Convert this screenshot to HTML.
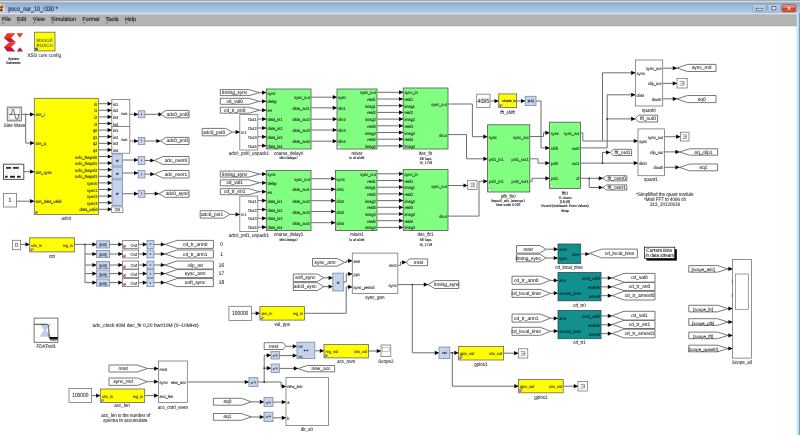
<!DOCTYPE html>
<html><head><meta charset="utf-8"><title>poco_nar_10_r330</title>
<style>
html,body{margin:0;padding:0;background:#fff;overflow:hidden;}
body{width:800px;height:435px;position:relative;font-family:"Liberation Sans",sans-serif;}
svg{position:absolute;left:0;top:0;will-change:transform;}
svg text{font-family:"Liberation Sans",sans-serif;text-rendering:geometricPrecision;}
</style></head><body>
<svg width="800" height="435" viewBox="0 0 800 435">
<defs>
<linearGradient id="tb" x1="0" y1="0" x2="0" y2="1">
<stop offset="0" stop-color="#89a9cf"/><stop offset="0.5" stop-color="#a2bddf"/><stop offset="1" stop-color="#b6cdea"/>
</linearGradient>
<linearGradient id="cls" x1="0" y1="0" x2="0" y2="1">
<stop offset="0" stop-color="#ec9c8c"/><stop offset="0.45" stop-color="#e07060"/><stop offset="0.55" stop-color="#d2401e"/><stop offset="1" stop-color="#d85a30"/>
</linearGradient>
<linearGradient id="btn" x1="0" y1="0" x2="0" y2="1">
<stop offset="0" stop-color="#c4d6ec"/><stop offset="0.5" stop-color="#a8c0de"/><stop offset="1" stop-color="#b8cce6"/>
</linearGradient>
</defs>
<rect x="0" y="0" width="800" height="435" fill="#fff"/>
<!-- title bar -->
<rect x="0" y="0" width="800" height="1.2" fill="#a9a9a9"/>
<rect x="0" y="1.2" width="800" height="1" fill="#cdd5df"/>
<rect x="0" y="2.2" width="800" height="11" fill="url(#tb)"/>
<rect x="0" y="13.2" width="800" height="1" fill="#d6dee8"/>
<rect x="0" y="14.2" width="797" height="11" fill="#b3b3b3"/>
<rect x="0" y="25.2" width="797" height="1" fill="#9a9a9a"/>
<rect x="796.6" y="13" width="1" height="422" fill="#c8d6ea"/>
<rect x="797.6" y="13" width="1.5" height="422" fill="#b8dcf6"/>
<rect x="799.1" y="13" width="0.9" height="422" fill="#5a98ae"/>
<rect x="0" y="4" width="4.6" height="8" fill="#e6dccc"/><ellipse cx="2.4" cy="6.6" rx="1.6" ry="2" fill="#c89a30"/><ellipse cx="1.4" cy="10.2" rx="1.3" ry="1.4" fill="#7a2a1a"/><ellipse cx="1.2" cy="7.4" rx="0.9" ry="1.2" fill="#6a2a10"/>
<text x="8.3" y="10.9" font-size="6.6" fill="#1e2c48" stroke="#1e2c48" stroke-width="0.15" textLength="49.4" lengthAdjust="spacingAndGlyphs">poco_nar_10_r330 *</text>
<rect x="752.4" y="4.5" width="13.9" height="7.5" rx="1.5" fill="url(#btn)" stroke="#7e98bc" stroke-width="0.6"/>
<rect x="756.3" y="8.4" width="6" height="1.8" fill="#f4f4f4" stroke="#333" stroke-width="0.5"/>
<rect x="767.6" y="4.5" width="12.9" height="7.5" rx="1.5" fill="url(#btn)" stroke="#7e98bc" stroke-width="0.6"/>
<rect x="772.1" y="6.5" width="3.8" height="3.4" fill="#f4f4f4" stroke="#333" stroke-width="0.6"/>
<rect x="782" y="4.5" width="13.9" height="7.5" rx="1.5" fill="url(#cls)" stroke="#7a4a48" stroke-width="0.6"/>
<path d="M787.6,6.8 L790.4,9.8 M790.4,6.8 L787.6,9.8" stroke="#fff" stroke-width="1.0"/>
<!-- menu -->
<g font-size="5.9" fill="#202020" stroke="#202020" stroke-width="0.15">
<text x="1.9" y="21.4" textLength="9" lengthAdjust="spacingAndGlyphs">File</text>
<rect x="1.9" y="22.6" width="3" height="0.6" fill="#555" stroke="none"/>
<text x="17" y="21.4" textLength="9.2" lengthAdjust="spacingAndGlyphs">Edit</text>
<rect x="17" y="22.6" width="3" height="0.6" fill="#555" stroke="none"/>
<text x="32.8" y="21.4" textLength="12" lengthAdjust="spacingAndGlyphs">View</text>
<rect x="32.8" y="22.6" width="3" height="0.6" fill="#555" stroke="none"/>
<text x="51" y="21.4" textLength="25" lengthAdjust="spacingAndGlyphs">Simulation</text>
<rect x="51" y="22.6" width="3" height="0.6" fill="#555" stroke="none"/>
<text x="82.6" y="21.4" textLength="16.8" lengthAdjust="spacingAndGlyphs">Format</text>
<rect x="82.6" y="22.6" width="3" height="0.6" fill="#555" stroke="none"/>
<text x="105.4" y="21.4" textLength="13.2" lengthAdjust="spacingAndGlyphs">Tools</text>
<rect x="105.4" y="22.6" width="3" height="0.6" fill="#555" stroke="none"/>
<text x="125" y="21.4" textLength="11" lengthAdjust="spacingAndGlyphs">Help</text>
<rect x="125" y="22.6" width="3" height="0.6" fill="#555" stroke="none"/>
</g>
<g font-family="Liberation Sans">
<g>
<polygon points="7.1,33.3 15.4,33.3 11.1,37.9 3.9,37.9" fill="#f2361e"/>
<polygon points="3.9,37.9 11.1,37.9 15.9,42.4 9.2,42.4" fill="#c9173c"/>
<polygon points="9.2,42.4 15.9,42.4 11.1,46.9 3.9,46.9" fill="#ee3322"/>
<polygon points="3.9,46.9 11.1,46.9 15.4,51.4 7.1,51.4" fill="#c4143a"/>
<polygon points="16.6,33.3 23.3,33.3 19.7,37.8" fill="#f2361e"/>
<polygon points="16.8,51.4 23.1,51.4 19.9,47.2" fill="#c4143a"/>
</g>
<text x="13.5" y="58.80" font-size="3.58" text-anchor="middle" fill="#444" font-weight="bold" dominant-baseline="central" textLength="10.67" lengthAdjust="spacingAndGlyphs" stroke="#444" stroke-width="0.16">System</text>
<text x="13.5" y="63.10" font-size="3.58" text-anchor="middle" fill="#444" font-weight="bold" dominant-baseline="central" textLength="14.41" lengthAdjust="spacingAndGlyphs" stroke="#444" stroke-width="0.16">Generator</text>
<rect x="34.5" y="32.2" width="20.5" height="18.7" fill="#ffff00" stroke="#666" stroke-width="0.8"/>
<text x="44.6" y="40.30" font-size="4.7" text-anchor="middle" fill="#3a3a3a" font-weight="normal" dominant-baseline="central" textLength="16" lengthAdjust="spacingAndGlyphs" stroke="#3a3a3a" stroke-width="0.02">MSSGE</text>
<text x="44.6" y="45.20" font-size="4.7" text-anchor="middle" fill="#3a3a3a" font-weight="normal" dominant-baseline="central" textLength="16" lengthAdjust="spacingAndGlyphs" stroke="#3a3a3a" stroke-width="0.02">ROACH</text>
<rect x="35.2" y="47.8" width="2.6" height="2.6" fill="#333"/>
<line x1="35.6" y1="50" x2="37.4" y2="48.2" stroke="#fff" stroke-width="0.6"/>
<text x="44.2" y="56.10" font-size="5.15" text-anchor="middle" fill="#444" font-weight="normal" dominant-baseline="central" textLength="33.6" lengthAdjust="spacingAndGlyphs" stroke="#444" stroke-width="0.1">XSG core config</text>
<rect x="34.3" y="98.3" width="64.2" height="116.1" fill="#ffff00" stroke="#666" stroke-width="0.8"/>
<rect x="34.9" y="211.2" width="2.8" height="2.8" fill="#f4f4f4" stroke="#777" stroke-width="0.4"/>
<polygon points="35.2,213.7 35.2,212.6 36.5,211.5 37.4,211.5 37.4,212.2 35.9,213.7" fill="#e02a2a"/>
<text x="35.5" y="114.90" font-size="4.37" text-anchor="start" fill="#222" font-weight="normal" dominant-baseline="central" textLength="9.1" lengthAdjust="spacingAndGlyphs" stroke="#222" stroke-width="0.1">sim_i</text>
<text x="35.5" y="143.60" font-size="4.37" text-anchor="start" fill="#222" font-weight="normal" dominant-baseline="central" textLength="10.4" lengthAdjust="spacingAndGlyphs" stroke="#222" stroke-width="0.1">sim_q</text>
<text x="35.5" y="172.20" font-size="4.37" text-anchor="start" fill="#222" font-weight="normal" dominant-baseline="central" textLength="16.25" lengthAdjust="spacingAndGlyphs" stroke="#222" stroke-width="0.1">sim_sync</text>
<text x="35.5" y="201.70" font-size="4.37" text-anchor="start" fill="#222" font-weight="normal" dominant-baseline="central" textLength="26.02" lengthAdjust="spacingAndGlyphs" stroke="#222" stroke-width="0.1">sim_data_valid</text>
<text x="97.3" y="104.20" font-size="4.37" text-anchor="end" fill="#222" font-weight="normal" dominant-baseline="central" textLength="3.04" lengthAdjust="spacingAndGlyphs" stroke="#222" stroke-width="0.1">i0</text>
<text x="97.3" y="110.80" font-size="4.37" text-anchor="end" fill="#222" font-weight="normal" dominant-baseline="central" textLength="3.04" lengthAdjust="spacingAndGlyphs" stroke="#222" stroke-width="0.1">i1</text>
<text x="97.3" y="117.40" font-size="4.37" text-anchor="end" fill="#222" font-weight="normal" dominant-baseline="central" textLength="3.04" lengthAdjust="spacingAndGlyphs" stroke="#222" stroke-width="0.1">i2</text>
<text x="97.3" y="124.00" font-size="4.37" text-anchor="end" fill="#222" font-weight="normal" dominant-baseline="central" textLength="3.04" lengthAdjust="spacingAndGlyphs" stroke="#222" stroke-width="0.1">i3</text>
<text x="97.3" y="130.60" font-size="4.37" text-anchor="end" fill="#222" font-weight="normal" dominant-baseline="central" textLength="4.34" lengthAdjust="spacingAndGlyphs" stroke="#222" stroke-width="0.1">q0</text>
<text x="97.3" y="137.20" font-size="4.37" text-anchor="end" fill="#222" font-weight="normal" dominant-baseline="central" textLength="4.34" lengthAdjust="spacingAndGlyphs" stroke="#222" stroke-width="0.1">q1</text>
<text x="97.3" y="143.80" font-size="4.37" text-anchor="end" fill="#222" font-weight="normal" dominant-baseline="central" textLength="4.34" lengthAdjust="spacingAndGlyphs" stroke="#222" stroke-width="0.1">q2</text>
<text x="97.3" y="150.40" font-size="4.37" text-anchor="end" fill="#222" font-weight="normal" dominant-baseline="central" textLength="4.34" lengthAdjust="spacingAndGlyphs" stroke="#222" stroke-width="0.1">q3</text>
<text x="97.3" y="157.00" font-size="4.37" text-anchor="end" fill="#222" font-weight="normal" dominant-baseline="central" textLength="22.34" lengthAdjust="spacingAndGlyphs" stroke="#222" stroke-width="0.1">ovfo_fanpol0</text>
<text x="97.3" y="163.60" font-size="4.37" text-anchor="end" fill="#222" font-weight="normal" dominant-baseline="central" textLength="22.34" lengthAdjust="spacingAndGlyphs" stroke="#222" stroke-width="0.1">ovfo_fanpol1</text>
<text x="97.3" y="170.20" font-size="4.37" text-anchor="end" fill="#222" font-weight="normal" dominant-baseline="central" textLength="22.34" lengthAdjust="spacingAndGlyphs" stroke="#222" stroke-width="0.1">ovfo_fanpol2</text>
<text x="97.3" y="176.80" font-size="4.37" text-anchor="end" fill="#222" font-weight="normal" dominant-baseline="central" textLength="22.34" lengthAdjust="spacingAndGlyphs" stroke="#222" stroke-width="0.1">ovfo_fanpol3</text>
<text x="97.3" y="183.40" font-size="4.37" text-anchor="end" fill="#222" font-weight="normal" dominant-baseline="central" textLength="10.19" lengthAdjust="spacingAndGlyphs" stroke="#222" stroke-width="0.1">sync0</text>
<text x="97.3" y="190.00" font-size="4.37" text-anchor="end" fill="#222" font-weight="normal" dominant-baseline="central" textLength="10.19" lengthAdjust="spacingAndGlyphs" stroke="#222" stroke-width="0.1">sync1</text>
<text x="97.3" y="196.60" font-size="4.37" text-anchor="end" fill="#222" font-weight="normal" dominant-baseline="central" textLength="10.19" lengthAdjust="spacingAndGlyphs" stroke="#222" stroke-width="0.1">sync2</text>
<text x="97.3" y="203.20" font-size="4.37" text-anchor="end" fill="#222" font-weight="normal" dominant-baseline="central" textLength="10.19" lengthAdjust="spacingAndGlyphs" stroke="#222" stroke-width="0.1">sync3</text>
<text x="97.3" y="209.80" font-size="4.37" text-anchor="end" fill="#222" font-weight="normal" dominant-baseline="central" textLength="17.78" lengthAdjust="spacingAndGlyphs" stroke="#222" stroke-width="0.1">data_valid</text>
<text x="66.4" y="218.70" font-size="5.04" text-anchor="middle" fill="#333" font-weight="normal" dominant-baseline="central" textLength="9.76" lengthAdjust="spacingAndGlyphs" stroke="#333" stroke-width="0.1">adc0</text>
<rect x="7.4" y="107.2" width="14.0" height="13.6" fill="#fff" stroke="#8a8a8a" stroke-width="1.3"/>
<rect x="9.0" y="108.8" width="10.8" height="10.4" fill="#fff" stroke="#aaa" stroke-width="0.6"/>
<path d="M9.5,114.5 L11.5,114.5 L12.3,109.6 L13.8,109.6 L14.6,114.5 L16,119 L17.8,119 L18.6,114.5 L19.6,114.5" fill="none" stroke="#333" stroke-width="0.7"/>
<polyline points="9.0,114.5 19.8,114.5" fill="none" stroke="#444" stroke-width="0.6"/>
<circle cx="25.7" cy="114.4" r="0.9" fill="#333"/>
<text x="14.5" y="126.10" font-size="5.04" text-anchor="middle" fill="#333" font-weight="normal" dominant-baseline="central" textLength="21.59" lengthAdjust="spacingAndGlyphs" stroke="#333" stroke-width="0.1">Sine Wave</text>
<polyline points="21.7,114.4 34.3,114.4" fill="none" stroke="#6e6e6e" stroke-width="1"/>
<polygon points="34.3,114.4 30.1,112.3 30.1,116.5" fill="#000"/>
<polyline points="25.7,114.4 25.7,143.1 34.3,143.1" fill="none" stroke="#6e6e6e" stroke-width="1"/>
<polygon points="34.3,143.1 30.1,141.0 30.1,145.2" fill="#000"/>
<rect x="3.5" y="164.2" width="20.3" height="15.2" fill="#fff" stroke="#555" stroke-width="1.0"/>
<rect x="6" y="166.9" width="5.2" height="1.9" fill="#333"/>
<rect x="13" y="166.9" width="5.8" height="1.9" fill="#333"/>
<rect x="5" y="175.8" width="2.6" height="1.9" fill="#222"/>
<rect x="10" y="175.8" width="5.0" height="1.9" fill="#222"/>
<rect x="17" y="175.8" width="3.6" height="1.9" fill="#222"/>
<rect x="6.5" y="170.5" width="1.2" height="0.5" fill="#bbb"/>
<rect x="10.5" y="170.5" width="1.2" height="0.5" fill="#bbb"/>
<rect x="13.5" y="170.5" width="1.2" height="0.5" fill="#bbb"/>
<rect x="17.5" y="170.5" width="1.2" height="0.5" fill="#bbb"/>
<rect x="6.5" y="172.5" width="1.2" height="0.5" fill="#bbb"/>
<rect x="10.5" y="172.5" width="1.2" height="0.5" fill="#bbb"/>
<rect x="13.5" y="172.5" width="1.2" height="0.5" fill="#bbb"/>
<rect x="17.5" y="172.5" width="1.2" height="0.5" fill="#bbb"/>
<rect x="6.5" y="174.2" width="1.2" height="0.5" fill="#bbb"/>
<rect x="10.5" y="174.2" width="1.2" height="0.5" fill="#bbb"/>
<rect x="13.5" y="174.2" width="1.2" height="0.5" fill="#bbb"/>
<rect x="17.5" y="174.2" width="1.2" height="0.5" fill="#bbb"/>
<polyline points="23.8,171.7 34.3,171.7" fill="none" stroke="#6e6e6e" stroke-width="1"/>
<polygon points="34.3,171.7 30.1,169.6 30.1,173.8" fill="#000"/>
<rect x="3.5" y="193.5" width="13.1" height="13.5" fill="#fff" stroke="#777" stroke-width="0.8"/>
<text x="10.0" y="200.80" font-size="6.0" text-anchor="middle" fill="#333" font-weight="normal" dominant-baseline="central" textLength="2.78" lengthAdjust="spacingAndGlyphs" stroke="#333" stroke-width="0.1">1</text>
<polyline points="16.6,201.2 34.3,201.2" fill="none" stroke="#6e6e6e" stroke-width="1"/>
<polygon points="34.3,201.2 30.1,199.1 30.1,203.3" fill="#000"/>
<rect x="111.8" y="99.5" width="18.0" height="27.0" fill="#fff" stroke="#777" stroke-width="0.8"/>
<rect x="111.8" y="126.5" width="18.0" height="26.7" fill="#fff" stroke="#777" stroke-width="0.8"/>
<polyline points="98.5,103.7 111.8,103.7" fill="none" stroke="#6e6e6e" stroke-width="1"/>
<polygon points="111.8,103.7 107.6,101.6 107.6,105.8" fill="#000"/>
<polyline points="98.5,110.3 111.8,110.3" fill="none" stroke="#6e6e6e" stroke-width="1"/>
<polygon points="111.8,110.3 107.6,108.2 107.6,112.4" fill="#000"/>
<polyline points="98.5,116.9 111.8,116.9" fill="none" stroke="#6e6e6e" stroke-width="1"/>
<polygon points="111.8,116.9 107.6,114.8 107.6,119.0" fill="#000"/>
<polyline points="98.5,123.5 111.8,123.5" fill="none" stroke="#6e6e6e" stroke-width="1"/>
<polygon points="111.8,123.5 107.6,121.4 107.6,125.6" fill="#000"/>
<polyline points="98.5,130.1 111.8,130.1" fill="none" stroke="#6e6e6e" stroke-width="1"/>
<polygon points="111.8,130.1 107.6,128.0 107.6,132.2" fill="#000"/>
<polyline points="98.5,136.7 111.8,136.7" fill="none" stroke="#6e6e6e" stroke-width="1"/>
<polygon points="111.8,136.7 107.6,134.6 107.6,138.8" fill="#000"/>
<polyline points="98.5,143.3 111.8,143.3" fill="none" stroke="#6e6e6e" stroke-width="1"/>
<polygon points="111.8,143.3 107.6,141.2 107.6,145.4" fill="#000"/>
<polyline points="98.5,149.9 111.8,149.9" fill="none" stroke="#6e6e6e" stroke-width="1"/>
<polygon points="111.8,149.9 107.6,147.8 107.6,152.0" fill="#000"/>
<text x="113.0" y="104.20" font-size="4.37" text-anchor="start" fill="#222" font-weight="normal" dominant-baseline="central" textLength="5.2" lengthAdjust="spacingAndGlyphs" stroke="#222" stroke-width="0.1">in1</text>
<text x="113.0" y="110.80" font-size="4.37" text-anchor="start" fill="#222" font-weight="normal" dominant-baseline="central" textLength="5.2" lengthAdjust="spacingAndGlyphs" stroke="#222" stroke-width="0.1">in2</text>
<text x="113.0" y="117.40" font-size="4.37" text-anchor="start" fill="#222" font-weight="normal" dominant-baseline="central" textLength="5.2" lengthAdjust="spacingAndGlyphs" stroke="#222" stroke-width="0.1">in3</text>
<text x="113.0" y="124.00" font-size="4.37" text-anchor="start" fill="#222" font-weight="normal" dominant-baseline="central" textLength="5.2" lengthAdjust="spacingAndGlyphs" stroke="#222" stroke-width="0.1">in4</text>
<text x="113.0" y="130.60" font-size="4.37" text-anchor="start" fill="#222" font-weight="normal" dominant-baseline="central" textLength="5.2" lengthAdjust="spacingAndGlyphs" stroke="#222" stroke-width="0.1">in1</text>
<text x="113.0" y="137.20" font-size="4.37" text-anchor="start" fill="#222" font-weight="normal" dominant-baseline="central" textLength="5.2" lengthAdjust="spacingAndGlyphs" stroke="#222" stroke-width="0.1">in2</text>
<text x="113.0" y="143.80" font-size="4.37" text-anchor="start" fill="#222" font-weight="normal" dominant-baseline="central" textLength="5.2" lengthAdjust="spacingAndGlyphs" stroke="#222" stroke-width="0.1">in3</text>
<text x="113.0" y="150.40" font-size="4.37" text-anchor="start" fill="#222" font-weight="normal" dominant-baseline="central" textLength="5.2" lengthAdjust="spacingAndGlyphs" stroke="#222" stroke-width="0.1">in4</text>
<text x="127.8" y="113.50" font-size="3.36" text-anchor="end" fill="#333" font-weight="normal" dominant-baseline="central" textLength="6.5" lengthAdjust="spacingAndGlyphs" stroke="#333" stroke-width="0.16">Out1</text>
<text x="127.8" y="140.30" font-size="3.36" text-anchor="end" fill="#333" font-weight="normal" dominant-baseline="central" textLength="6.5" lengthAdjust="spacingAndGlyphs" stroke="#333" stroke-width="0.16">Out1</text>
<polyline points="129.8,114.3 138.3,114.3" fill="none" stroke="#6e6e6e" stroke-width="1"/>
<polygon points="138.3,114.3 134.1,112.2 134.1,116.4" fill="#000"/>
<rect x="138.3" y="110.8" width="6.5" height="7.0" fill="#c6d3ec" stroke="#7d8aa3" stroke-width="0.8"/>
<text x="141.6" y="114.80" font-size="3.36" text-anchor="middle" fill="#223" font-weight="normal" dominant-baseline="central" textLength="1.0" lengthAdjust="spacingAndGlyphs" stroke="#223" stroke-width="0.16">¹</text>
<polyline points="144.8,114.3 162.7,114.3" fill="none" stroke="#6e6e6e" stroke-width="1"/>
<polygon points="162.7,114.3 158.5,112.2 158.5,116.4" fill="#000"/>
<polygon points="160.5,114.1 166.1,110.4 189.0,110.4 189.0,117.8 166.1,117.8" fill="#fff" stroke="#555" stroke-width="0.8"/>
<text x="177.6" y="115.10" font-size="4.9" text-anchor="middle" fill="#333" font-weight="normal" dominant-baseline="central" textLength="22.15" lengthAdjust="spacingAndGlyphs" stroke="#333" stroke-width="0.1">adc0_pol0</text>
<polyline points="129.8,141.0 138.3,141.0" fill="none" stroke="#6e6e6e" stroke-width="1"/>
<polygon points="138.3,141.0 134.1,138.9 134.1,143.1" fill="#000"/>
<rect x="138.3" y="137.4" width="6.5" height="7.1" fill="#c6d3ec" stroke="#7d8aa3" stroke-width="0.8"/>
<text x="141.6" y="141.45" font-size="3.36" text-anchor="middle" fill="#223" font-weight="normal" dominant-baseline="central" textLength="1.0" lengthAdjust="spacingAndGlyphs" stroke="#223" stroke-width="0.16">¹</text>
<polyline points="144.8,141.0 160.5,141.0" fill="none" stroke="#6e6e6e" stroke-width="1"/>
<polygon points="160.5,141.0 156.3,138.9 156.3,143.1" fill="#000"/>
<polygon points="160.5,140.9 166.1,137.4 189.0,137.4 189.0,144.5 166.1,144.5" fill="#fff" stroke="#555" stroke-width="0.8"/>
<text x="177.6" y="141.95" font-size="4.9" text-anchor="middle" fill="#333" font-weight="normal" dominant-baseline="central" textLength="22.15" lengthAdjust="spacingAndGlyphs" stroke="#333" stroke-width="0.1">adc0_pol1</text>
<polyline points="98.5,156.5 112.0,156.5" fill="none" stroke="#6e6e6e" stroke-width="1"/>
<polygon points="112.0,156.5 107.8,154.4 107.8,158.6" fill="#000"/>
<polyline points="98.5,163.1 112.0,163.1" fill="none" stroke="#6e6e6e" stroke-width="1"/>
<polygon points="112.0,163.1 107.8,161.0 107.8,165.2" fill="#000"/>
<polyline points="98.5,169.7 112.0,169.7" fill="none" stroke="#6e6e6e" stroke-width="1"/>
<polygon points="112.0,169.7 107.8,167.6 107.8,171.8" fill="#000"/>
<polyline points="98.5,176.3 112.0,176.3" fill="none" stroke="#6e6e6e" stroke-width="1"/>
<polygon points="112.0,176.3 107.8,174.2 107.8,178.4" fill="#000"/>
<polyline points="98.5,182.9 112.0,182.9" fill="none" stroke="#6e6e6e" stroke-width="1"/>
<polygon points="112.0,182.9 107.8,180.8 107.8,185.0" fill="#000"/>
<polyline points="98.5,189.5 112.0,189.5" fill="none" stroke="#6e6e6e" stroke-width="1"/>
<polygon points="112.0,189.5 107.8,187.4 107.8,191.6" fill="#000"/>
<polyline points="98.5,196.1 112.0,196.1" fill="none" stroke="#6e6e6e" stroke-width="1"/>
<polygon points="112.0,196.1 107.8,194.0 107.8,198.2" fill="#000"/>
<polyline points="98.5,202.7 112.0,202.7" fill="none" stroke="#6e6e6e" stroke-width="1"/>
<polygon points="112.0,202.7 107.8,200.6 107.8,204.8" fill="#000"/>
<polyline points="98.5,209.3 112.0,209.3" fill="none" stroke="#6e6e6e" stroke-width="1"/>
<polygon points="112.0,209.3 107.8,207.2 107.8,211.4" fill="#000"/>
<rect x="112.0" y="153.9" width="10.5" height="12.1" fill="#c6d3ec" stroke="#7d8aa3" stroke-width="0.8"/>
<text x="117.2" y="160.45" font-size="3.92" text-anchor="middle" fill="#223" font-weight="normal" dominant-baseline="central" textLength="3.11" lengthAdjust="spacingAndGlyphs" stroke="#223" stroke-width="0.16">or</text>
<rect x="112.0" y="167.0" width="10.5" height="11.9" fill="#c6d3ec" stroke="#7d8aa3" stroke-width="0.8"/>
<text x="117.2" y="173.45" font-size="3.92" text-anchor="middle" fill="#223" font-weight="normal" dominant-baseline="central" textLength="3.11" lengthAdjust="spacingAndGlyphs" stroke="#223" stroke-width="0.16">or</text>
<rect x="112.0" y="179.8" width="10.5" height="25.8" fill="#c6d3ec" stroke="#7d8aa3" stroke-width="0.8"/>
<text x="117.2" y="193.20" font-size="3.92" text-anchor="middle" fill="#223" font-weight="normal" dominant-baseline="central" textLength="3.11" lengthAdjust="spacingAndGlyphs" stroke="#223" stroke-width="0.16">or</text>
<rect x="111.7" y="206.9" width="11.2" height="5.5" fill="#fff" stroke="#666" stroke-width="0.7"/>
<polyline points="114.5,208.6 119.5,208.6 119.5,210.8 114.5,210.8" fill="none" stroke="#555" stroke-width="0.6"/>
<polyline points="115.6,209.7 119.5,209.7" fill="none" stroke="#555" stroke-width="0.6"/>
<polyline points="122.5,160.0 138.2,160.0" fill="none" stroke="#6e6e6e" stroke-width="1"/>
<polygon points="138.2,160.0 134.0,157.9 134.0,162.1" fill="#000"/>
<rect x="138.2" y="156.6" width="6.7" height="7.8" fill="#c6d3ec" stroke="#7d8aa3" stroke-width="0.8"/>
<text x="141.6" y="161.00" font-size="3.36" text-anchor="middle" fill="#223" font-weight="normal" dominant-baseline="central" textLength="1.0" lengthAdjust="spacingAndGlyphs" stroke="#223" stroke-width="0.16">¹</text>
<polyline points="144.9,160.5 154.5,160.5" fill="none" stroke="#6e6e6e" stroke-width="1"/>
<polygon points="154.5,160.5 150.3,158.4 150.3,162.6" fill="#000"/>
<polygon points="154.5,160.4 162.8,156.5 189.0,156.5 189.0,164.4 162.8,164.4" fill="#fff" stroke="#555" stroke-width="0.8"/>
<text x="175.9" y="161.45" font-size="4.9" text-anchor="middle" fill="#333" font-weight="normal" dominant-baseline="central" textLength="22.42" lengthAdjust="spacingAndGlyphs" stroke="#333" stroke-width="0.1">adc_over0</text>
<polyline points="122.5,173.0 138.2,173.0" fill="none" stroke="#6e6e6e" stroke-width="1"/>
<polygon points="138.2,173.0 134.0,170.9 134.0,175.1" fill="#000"/>
<rect x="138.2" y="170.5" width="6.7" height="7.5" fill="#c6d3ec" stroke="#7d8aa3" stroke-width="0.8"/>
<text x="141.6" y="174.75" font-size="3.36" text-anchor="middle" fill="#223" font-weight="normal" dominant-baseline="central" textLength="1.0" lengthAdjust="spacingAndGlyphs" stroke="#223" stroke-width="0.16">¹</text>
<polyline points="144.9,174.2 154.5,174.2" fill="none" stroke="#6e6e6e" stroke-width="1"/>
<polygon points="154.5,174.2 150.3,172.1 150.3,176.3" fill="#000"/>
<polygon points="154.5,174.2 162.8,170.5 189.0,170.5 189.0,178.0 162.8,178.0" fill="#fff" stroke="#555" stroke-width="0.8"/>
<text x="175.9" y="175.25" font-size="4.9" text-anchor="middle" fill="#333" font-weight="normal" dominant-baseline="central" textLength="22.42" lengthAdjust="spacingAndGlyphs" stroke="#333" stroke-width="0.1">adc_over1</text>
<polyline points="122.5,193.7 138.2,193.7" fill="none" stroke="#6e6e6e" stroke-width="1"/>
<polygon points="138.2,193.7 134.0,191.6 134.0,195.8" fill="#000"/>
<rect x="138.2" y="190.3" width="6.7" height="7.0" fill="#c6d3ec" stroke="#7d8aa3" stroke-width="0.8"/>
<text x="141.6" y="194.30" font-size="3.36" text-anchor="middle" fill="#223" font-weight="normal" dominant-baseline="central" textLength="1.0" lengthAdjust="spacingAndGlyphs" stroke="#223" stroke-width="0.16">¹</text>
<polyline points="144.9,193.7 158.9,193.7" fill="none" stroke="#6e6e6e" stroke-width="1"/>
<polygon points="158.9,193.7 154.7,191.6 154.7,195.8" fill="#000"/>
<polygon points="158.9,193.8 165.2,190.3 189.0,190.3 189.0,197.3 165.2,197.3" fill="#fff" stroke="#555" stroke-width="0.8"/>
<text x="177.1" y="194.80" font-size="4.9" text-anchor="middle" fill="#333" font-weight="normal" dominant-baseline="central" textLength="22.95" lengthAdjust="spacingAndGlyphs" stroke="#333" stroke-width="0.1">adc0_sync</text>
<polygon points="220.3,89.6 249.0,89.6 259.4,92.6 249.0,95.6 220.3,95.6" fill="#fff" stroke="#555" stroke-width="0.8"/>
<text x="234.7" y="93.60" font-size="4.9" text-anchor="middle" fill="#333" font-weight="normal" dominant-baseline="central" textLength="25.34" lengthAdjust="spacingAndGlyphs" stroke="#333" stroke-width="0.1">timing_sync</text>
<polygon points="220.3,98.3 249.0,98.3 259.4,101.3 249.0,104.3 220.3,104.3" fill="#fff" stroke="#555" stroke-width="0.8"/>
<text x="234.7" y="102.30" font-size="4.9" text-anchor="middle" fill="#333" font-weight="normal" dominant-baseline="central" textLength="16.54" lengthAdjust="spacingAndGlyphs" stroke="#333" stroke-width="0.1">cd_val0</text>
<polygon points="220.3,107.2 249.0,107.2 259.4,110.2 249.0,113.2 220.3,113.2" fill="#fff" stroke="#555" stroke-width="0.8"/>
<text x="234.7" y="111.20" font-size="4.9" text-anchor="middle" fill="#333" font-weight="normal" dominant-baseline="central" textLength="21.35" lengthAdjust="spacingAndGlyphs" stroke="#333" stroke-width="0.1">cd_tr_en0</text>
<polyline points="259.4,92.6 266.3,92.6" fill="none" stroke="#6e6e6e" stroke-width="1"/>
<polygon points="266.3,92.6 262.1,90.5 262.1,94.7" fill="#000"/>
<polyline points="259.4,101.3 266.3,101.3" fill="none" stroke="#6e6e6e" stroke-width="1"/>
<polygon points="266.3,101.3 262.1,99.2 262.1,103.4" fill="#000"/>
<polyline points="259.4,110.2 266.3,110.2" fill="none" stroke="#6e6e6e" stroke-width="1"/>
<polygon points="266.3,110.2 262.1,108.1 262.1,112.3" fill="#000"/>
<rect x="239.8" y="114.6" width="18.0" height="35.4" fill="#fff" stroke="#777" stroke-width="0.8"/>
<text x="256.6" y="119.60" font-size="4.37" text-anchor="end" fill="#222" font-weight="normal" dominant-baseline="central" textLength="8.46" lengthAdjust="spacingAndGlyphs" stroke="#222" stroke-width="0.1">Out1</text>
<text x="256.6" y="128.50" font-size="4.37" text-anchor="end" fill="#222" font-weight="normal" dominant-baseline="central" textLength="8.46" lengthAdjust="spacingAndGlyphs" stroke="#222" stroke-width="0.1">Out2</text>
<text x="256.6" y="137.30" font-size="4.37" text-anchor="end" fill="#222" font-weight="normal" dominant-baseline="central" textLength="8.46" lengthAdjust="spacingAndGlyphs" stroke="#222" stroke-width="0.1">Out3</text>
<text x="256.6" y="146.20" font-size="4.37" text-anchor="end" fill="#222" font-weight="normal" dominant-baseline="central" textLength="8.46" lengthAdjust="spacingAndGlyphs" stroke="#222" stroke-width="0.1">Out4</text>
<text x="241.3" y="132.60" font-size="4.14" text-anchor="start" fill="#333" font-weight="normal" dominant-baseline="central" textLength="5.14" lengthAdjust="spacingAndGlyphs" stroke="#333" stroke-width="0.1">In1</text>
<polyline points="257.8,119.1 266.3,119.1" fill="none" stroke="#6e6e6e" stroke-width="1"/>
<polygon points="266.3,119.1 262.1,117.0 262.1,121.2" fill="#000"/>
<polyline points="257.8,128.0 266.3,128.0" fill="none" stroke="#6e6e6e" stroke-width="1"/>
<polygon points="266.3,128.0 262.1,125.9 262.1,130.1" fill="#000"/>
<polyline points="257.8,136.8 266.3,136.8" fill="none" stroke="#6e6e6e" stroke-width="1"/>
<polygon points="266.3,136.8 262.1,134.7 262.1,138.9" fill="#000"/>
<polyline points="257.8,145.7 266.3,145.7" fill="none" stroke="#6e6e6e" stroke-width="1"/>
<polygon points="266.3,145.7 262.1,143.6 262.1,147.8" fill="#000"/>
<polygon points="202.2,128.4 225.8,128.4 232.0,132.1 225.8,135.8 202.2,135.8" fill="#fff" stroke="#555" stroke-width="0.8"/>
<text x="214.0" y="133.10" font-size="4.9" text-anchor="middle" fill="#333" font-weight="normal" dominant-baseline="central" textLength="22.15" lengthAdjust="spacingAndGlyphs" stroke="#333" stroke-width="0.1">adc0_pol0</text>
<polyline points="232.0,132.1 239.8,132.1" fill="none" stroke="#6e6e6e" stroke-width="1"/>
<polygon points="239.8,132.1 235.6,130.0 235.6,134.2" fill="#000"/>
<text x="248.8" y="154.10" font-size="5.04" text-anchor="middle" fill="#333" font-weight="normal" dominant-baseline="central" textLength="40.29" lengthAdjust="spacingAndGlyphs" stroke="#333" stroke-width="0.1">adc0_pol0_unpack1</text>
<rect x="266.3" y="89.0" width="44.7" height="60.0" fill="#80ff80" stroke="#555" stroke-width="0.8"/>
<rect x="267.1" y="145.4" width="2.8" height="2.8" fill="#e8ffe8" stroke="#888" stroke-width="0.4"/>
<text x="267.5" y="93.10" font-size="4.37" text-anchor="start" fill="#222" font-weight="normal" dominant-baseline="central" textLength="8.02" lengthAdjust="spacingAndGlyphs" stroke="#222" stroke-width="0.1">sync</text>
<text x="267.5" y="101.80" font-size="4.37" text-anchor="start" fill="#222" font-weight="normal" dominant-baseline="central" textLength="9.32" lengthAdjust="spacingAndGlyphs" stroke="#222" stroke-width="0.1">delay</text>
<text x="267.5" y="110.70" font-size="4.37" text-anchor="start" fill="#222" font-weight="normal" dominant-baseline="central" textLength="4.34" lengthAdjust="spacingAndGlyphs" stroke="#222" stroke-width="0.1">en</text>
<text x="267.5" y="119.60" font-size="4.37" text-anchor="start" fill="#222" font-weight="normal" dominant-baseline="central" textLength="14.96" lengthAdjust="spacingAndGlyphs" stroke="#222" stroke-width="0.1">data_in1</text>
<text x="267.5" y="128.50" font-size="4.37" text-anchor="start" fill="#222" font-weight="normal" dominant-baseline="central" textLength="14.96" lengthAdjust="spacingAndGlyphs" stroke="#222" stroke-width="0.1">data_in2</text>
<text x="267.5" y="137.30" font-size="4.37" text-anchor="start" fill="#222" font-weight="normal" dominant-baseline="central" textLength="14.96" lengthAdjust="spacingAndGlyphs" stroke="#222" stroke-width="0.1">data_in3</text>
<text x="267.5" y="146.20" font-size="4.37" text-anchor="start" fill="#222" font-weight="normal" dominant-baseline="central" textLength="14.96" lengthAdjust="spacingAndGlyphs" stroke="#222" stroke-width="0.1">data_in4</text>
<text x="309.8" y="97.70" font-size="4.37" text-anchor="end" fill="#222" font-weight="normal" dominant-baseline="central" textLength="15.61" lengthAdjust="spacingAndGlyphs" stroke="#222" stroke-width="0.1">sync_out</text>
<text x="309.8" y="108.30" font-size="4.37" text-anchor="end" fill="#222" font-weight="normal" dominant-baseline="central" textLength="17.35" lengthAdjust="spacingAndGlyphs" stroke="#222" stroke-width="0.1">data_out1</text>
<text x="309.8" y="119.70" font-size="4.37" text-anchor="end" fill="#222" font-weight="normal" dominant-baseline="central" textLength="17.35" lengthAdjust="spacingAndGlyphs" stroke="#222" stroke-width="0.1">data_out2</text>
<text x="309.8" y="130.50" font-size="4.37" text-anchor="end" fill="#222" font-weight="normal" dominant-baseline="central" textLength="17.35" lengthAdjust="spacingAndGlyphs" stroke="#222" stroke-width="0.1">data_out3</text>
<text x="309.8" y="141.70" font-size="4.37" text-anchor="end" fill="#222" font-weight="normal" dominant-baseline="central" textLength="17.35" lengthAdjust="spacingAndGlyphs" stroke="#222" stroke-width="0.1">data_out4</text>
<text x="288.6" y="153.70" font-size="5.04" text-anchor="middle" fill="#333" font-weight="normal" dominant-baseline="central" textLength="29.27" lengthAdjust="spacingAndGlyphs" stroke="#333" stroke-width="0.1">coarse_delay0</text>
<text x="288.6" y="158.40" font-size="3.7" text-anchor="middle" fill="#333" font-weight="normal" dominant-baseline="central" textLength="18.43" lengthAdjust="spacingAndGlyphs" stroke="#333" stroke-width="0.16">Min Delay=7</text>
<polyline points="311.0,97.2 337.0,97.2" fill="none" stroke="#6e6e6e" stroke-width="1"/>
<polygon points="337.0,97.2 332.8,95.1 332.8,99.3" fill="#000"/>
<polyline points="311.0,107.8 337.0,107.8" fill="none" stroke="#6e6e6e" stroke-width="1"/>
<polygon points="337.0,107.8 332.8,105.7 332.8,109.9" fill="#000"/>
<polyline points="311.0,119.2 337.0,119.2" fill="none" stroke="#6e6e6e" stroke-width="1"/>
<polygon points="337.0,119.2 332.8,117.1 332.8,121.3" fill="#000"/>
<polyline points="311.0,130.0 337.0,130.0" fill="none" stroke="#6e6e6e" stroke-width="1"/>
<polygon points="337.0,130.0 332.8,127.9 332.8,132.1" fill="#000"/>
<polyline points="311.0,141.2 337.0,141.2" fill="none" stroke="#6e6e6e" stroke-width="1"/>
<polygon points="337.0,141.2 332.8,139.1 332.8,143.3" fill="#000"/>
<rect x="337.0" y="89.0" width="40.0" height="60.0" fill="#80ff80" stroke="#555" stroke-width="0.8"/>
<rect x="337.8" y="145.4" width="2.8" height="2.8" fill="#e8ffe8" stroke="#888" stroke-width="0.4"/>
<text x="338.2" y="97.70" font-size="4.37" text-anchor="start" fill="#222" font-weight="normal" dominant-baseline="central" textLength="8.02" lengthAdjust="spacingAndGlyphs" stroke="#222" stroke-width="0.1">sync</text>
<text x="338.2" y="108.30" font-size="4.37" text-anchor="start" fill="#222" font-weight="normal" dominant-baseline="central" textLength="7.37" lengthAdjust="spacingAndGlyphs" stroke="#222" stroke-width="0.1">din1</text>
<text x="338.2" y="119.70" font-size="4.37" text-anchor="start" fill="#222" font-weight="normal" dominant-baseline="central" textLength="7.37" lengthAdjust="spacingAndGlyphs" stroke="#222" stroke-width="0.1">din2</text>
<text x="338.2" y="130.50" font-size="4.37" text-anchor="start" fill="#222" font-weight="normal" dominant-baseline="central" textLength="7.37" lengthAdjust="spacingAndGlyphs" stroke="#222" stroke-width="0.1">din3</text>
<text x="338.2" y="141.70" font-size="4.37" text-anchor="start" fill="#222" font-weight="normal" dominant-baseline="central" textLength="7.37" lengthAdjust="spacingAndGlyphs" stroke="#222" stroke-width="0.1">din4</text>
<text x="375.8" y="92.80" font-size="4.37" text-anchor="end" fill="#222" font-weight="normal" dominant-baseline="central" textLength="15.61" lengthAdjust="spacingAndGlyphs" stroke="#222" stroke-width="0.1">sync_out</text>
<text x="375.8" y="99.50" font-size="4.37" text-anchor="end" fill="#222" font-weight="normal" dominant-baseline="central" textLength="8.67" lengthAdjust="spacingAndGlyphs" stroke="#222" stroke-width="0.1">real1</text>
<text x="375.8" y="106.20" font-size="4.37" text-anchor="end" fill="#222" font-weight="normal" dominant-baseline="central" textLength="10.62" lengthAdjust="spacingAndGlyphs" stroke="#222" stroke-width="0.1">imag1</text>
<text x="375.8" y="112.90" font-size="4.37" text-anchor="end" fill="#222" font-weight="normal" dominant-baseline="central" textLength="8.67" lengthAdjust="spacingAndGlyphs" stroke="#222" stroke-width="0.1">real2</text>
<text x="375.8" y="119.60" font-size="4.37" text-anchor="end" fill="#222" font-weight="normal" dominant-baseline="central" textLength="10.62" lengthAdjust="spacingAndGlyphs" stroke="#222" stroke-width="0.1">imag2</text>
<text x="375.8" y="126.30" font-size="4.37" text-anchor="end" fill="#222" font-weight="normal" dominant-baseline="central" textLength="8.67" lengthAdjust="spacingAndGlyphs" stroke="#222" stroke-width="0.1">real3</text>
<text x="375.8" y="133.00" font-size="4.37" text-anchor="end" fill="#222" font-weight="normal" dominant-baseline="central" textLength="10.62" lengthAdjust="spacingAndGlyphs" stroke="#222" stroke-width="0.1">imag3</text>
<text x="375.8" y="139.70" font-size="4.37" text-anchor="end" fill="#222" font-weight="normal" dominant-baseline="central" textLength="8.67" lengthAdjust="spacingAndGlyphs" stroke="#222" stroke-width="0.1">real4</text>
<text x="375.8" y="146.40" font-size="4.37" text-anchor="end" fill="#222" font-weight="normal" dominant-baseline="central" textLength="10.62" lengthAdjust="spacingAndGlyphs" stroke="#222" stroke-width="0.1">imag4</text>
<text x="357.0" y="153.70" font-size="5.04" text-anchor="middle" fill="#333" font-weight="normal" dominant-baseline="central" textLength="11.0" lengthAdjust="spacingAndGlyphs" stroke="#333" stroke-width="0.1">mixer</text>
<text x="357.0" y="158.40" font-size="3.7" text-anchor="middle" fill="#333" font-weight="normal" dominant-baseline="central" textLength="14.95" lengthAdjust="spacingAndGlyphs" stroke="#333" stroke-width="0.16">lo af =0dB</text>
<polyline points="377.0,92.3 403.2,92.3" fill="none" stroke="#6e6e6e" stroke-width="1"/>
<polygon points="403.2,92.3 399.0,90.2 399.0,94.4" fill="#000"/>
<polyline points="377.0,99.0 403.2,99.0" fill="none" stroke="#6e6e6e" stroke-width="1"/>
<polygon points="403.2,99.0 399.0,96.9 399.0,101.1" fill="#000"/>
<polyline points="377.0,105.7 403.2,105.7" fill="none" stroke="#6e6e6e" stroke-width="1"/>
<polygon points="403.2,105.7 399.0,103.6 399.0,107.8" fill="#000"/>
<polyline points="377.0,112.4 403.2,112.4" fill="none" stroke="#6e6e6e" stroke-width="1"/>
<polygon points="403.2,112.4 399.0,110.3 399.0,114.5" fill="#000"/>
<polyline points="377.0,119.1 403.2,119.1" fill="none" stroke="#6e6e6e" stroke-width="1"/>
<polygon points="403.2,119.1 399.0,117.0 399.0,121.2" fill="#000"/>
<polyline points="377.0,125.8 403.2,125.8" fill="none" stroke="#6e6e6e" stroke-width="1"/>
<polygon points="403.2,125.8 399.0,123.7 399.0,127.9" fill="#000"/>
<polyline points="377.0,132.5 403.2,132.5" fill="none" stroke="#6e6e6e" stroke-width="1"/>
<polygon points="403.2,132.5 399.0,130.4 399.0,134.6" fill="#000"/>
<polyline points="377.0,139.2 403.2,139.2" fill="none" stroke="#6e6e6e" stroke-width="1"/>
<polygon points="403.2,139.2 399.0,137.1 399.0,141.3" fill="#000"/>
<polyline points="377.0,145.9 403.2,145.9" fill="none" stroke="#6e6e6e" stroke-width="1"/>
<polygon points="403.2,145.9 399.0,143.8 399.0,148.0" fill="#000"/>
<rect x="403.2" y="88.0" width="44.8" height="61.0" fill="#80ff80" stroke="#555" stroke-width="0.8"/>
<rect x="404.0" y="145.4" width="2.8" height="2.8" fill="#e8ffe8" stroke="#888" stroke-width="0.4"/>
<text x="404.4" y="92.80" font-size="4.37" text-anchor="start" fill="#222" font-weight="normal" dominant-baseline="central" textLength="13.22" lengthAdjust="spacingAndGlyphs" stroke="#222" stroke-width="0.1">sync_in</text>
<text x="404.4" y="99.50" font-size="4.37" text-anchor="start" fill="#222" font-weight="normal" dominant-baseline="central" textLength="8.67" lengthAdjust="spacingAndGlyphs" stroke="#222" stroke-width="0.1">real1</text>
<text x="404.4" y="106.20" font-size="4.37" text-anchor="start" fill="#222" font-weight="normal" dominant-baseline="central" textLength="10.62" lengthAdjust="spacingAndGlyphs" stroke="#222" stroke-width="0.1">imag1</text>
<text x="404.4" y="112.90" font-size="4.37" text-anchor="start" fill="#222" font-weight="normal" dominant-baseline="central" textLength="8.67" lengthAdjust="spacingAndGlyphs" stroke="#222" stroke-width="0.1">real2</text>
<text x="404.4" y="119.60" font-size="4.37" text-anchor="start" fill="#222" font-weight="normal" dominant-baseline="central" textLength="10.62" lengthAdjust="spacingAndGlyphs" stroke="#222" stroke-width="0.1">imag2</text>
<text x="404.4" y="126.30" font-size="4.37" text-anchor="start" fill="#222" font-weight="normal" dominant-baseline="central" textLength="8.67" lengthAdjust="spacingAndGlyphs" stroke="#222" stroke-width="0.1">real3</text>
<text x="404.4" y="133.00" font-size="4.37" text-anchor="start" fill="#222" font-weight="normal" dominant-baseline="central" textLength="10.62" lengthAdjust="spacingAndGlyphs" stroke="#222" stroke-width="0.1">imag3</text>
<text x="404.4" y="139.70" font-size="4.37" text-anchor="start" fill="#222" font-weight="normal" dominant-baseline="central" textLength="8.67" lengthAdjust="spacingAndGlyphs" stroke="#222" stroke-width="0.1">real4</text>
<text x="404.4" y="146.40" font-size="4.37" text-anchor="start" fill="#222" font-weight="normal" dominant-baseline="central" textLength="10.62" lengthAdjust="spacingAndGlyphs" stroke="#222" stroke-width="0.1">imag4</text>
<text x="446.8" y="104.50" font-size="4.37" text-anchor="end" fill="#222" font-weight="normal" dominant-baseline="central" textLength="15.61" lengthAdjust="spacingAndGlyphs" stroke="#222" stroke-width="0.1">sync_out</text>
<text x="446.8" y="135.10" font-size="4.37" text-anchor="end" fill="#222" font-weight="normal" dominant-baseline="central" textLength="7.59" lengthAdjust="spacingAndGlyphs" stroke="#222" stroke-width="0.1">dout</text>
<text x="425.6" y="153.80" font-size="5.04" text-anchor="middle" fill="#333" font-weight="normal" dominant-baseline="central" textLength="13.51" lengthAdjust="spacingAndGlyphs" stroke="#333" stroke-width="0.1">dec_fir</text>
<text x="425.6" y="158.70" font-size="3.7" text-anchor="middle" fill="#333" font-weight="normal" dominant-baseline="central" textLength="11.5" lengthAdjust="spacingAndGlyphs" stroke="#333" stroke-width="0.16">68 Taps</text>
<text x="425.6" y="163.10" font-size="3.7" text-anchor="middle" fill="#333" font-weight="normal" dominant-baseline="central" textLength="12.85" lengthAdjust="spacingAndGlyphs" stroke="#333" stroke-width="0.16">10_1718</text>
<polygon points="220.3,171.1 249.0,171.1 259.4,174.1 249.0,177.1 220.3,177.1" fill="#fff" stroke="#555" stroke-width="0.8"/>
<text x="234.7" y="175.10" font-size="4.9" text-anchor="middle" fill="#333" font-weight="normal" dominant-baseline="central" textLength="25.34" lengthAdjust="spacingAndGlyphs" stroke="#333" stroke-width="0.1">timing_sync</text>
<polygon points="220.3,179.8 249.0,179.8 259.4,182.8 249.0,185.8 220.3,185.8" fill="#fff" stroke="#555" stroke-width="0.8"/>
<text x="234.7" y="183.80" font-size="4.9" text-anchor="middle" fill="#333" font-weight="normal" dominant-baseline="central" textLength="16.54" lengthAdjust="spacingAndGlyphs" stroke="#333" stroke-width="0.1">cd_val1</text>
<polygon points="220.3,188.7 249.0,188.7 259.4,191.7 249.0,194.7 220.3,194.7" fill="#fff" stroke="#555" stroke-width="0.8"/>
<text x="234.7" y="192.70" font-size="4.9" text-anchor="middle" fill="#333" font-weight="normal" dominant-baseline="central" textLength="21.35" lengthAdjust="spacingAndGlyphs" stroke="#333" stroke-width="0.1">cd_tr_en1</text>
<polyline points="259.4,174.1 266.3,174.1" fill="none" stroke="#6e6e6e" stroke-width="1"/>
<polygon points="266.3,174.1 262.1,172.0 262.1,176.2" fill="#000"/>
<polyline points="259.4,182.8 266.3,182.8" fill="none" stroke="#6e6e6e" stroke-width="1"/>
<polygon points="266.3,182.8 262.1,180.7 262.1,184.9" fill="#000"/>
<polyline points="259.4,191.7 266.3,191.7" fill="none" stroke="#6e6e6e" stroke-width="1"/>
<polygon points="266.3,191.7 262.1,189.6 262.1,193.8" fill="#000"/>
<rect x="239.8" y="196.1" width="18.0" height="35.4" fill="#fff" stroke="#777" stroke-width="0.8"/>
<text x="256.6" y="201.10" font-size="4.37" text-anchor="end" fill="#222" font-weight="normal" dominant-baseline="central" textLength="8.46" lengthAdjust="spacingAndGlyphs" stroke="#222" stroke-width="0.1">Out1</text>
<text x="256.6" y="210.00" font-size="4.37" text-anchor="end" fill="#222" font-weight="normal" dominant-baseline="central" textLength="8.46" lengthAdjust="spacingAndGlyphs" stroke="#222" stroke-width="0.1">Out2</text>
<text x="256.6" y="218.80" font-size="4.37" text-anchor="end" fill="#222" font-weight="normal" dominant-baseline="central" textLength="8.46" lengthAdjust="spacingAndGlyphs" stroke="#222" stroke-width="0.1">Out3</text>
<text x="256.6" y="227.70" font-size="4.37" text-anchor="end" fill="#222" font-weight="normal" dominant-baseline="central" textLength="8.46" lengthAdjust="spacingAndGlyphs" stroke="#222" stroke-width="0.1">Out4</text>
<text x="241.3" y="214.90" font-size="4.14" text-anchor="start" fill="#333" font-weight="normal" dominant-baseline="central" textLength="5.14" lengthAdjust="spacingAndGlyphs" stroke="#333" stroke-width="0.1">In1</text>
<polyline points="257.8,200.6 266.3,200.6" fill="none" stroke="#6e6e6e" stroke-width="1"/>
<polygon points="266.3,200.6 262.1,198.5 262.1,202.7" fill="#000"/>
<polyline points="257.8,209.5 266.3,209.5" fill="none" stroke="#6e6e6e" stroke-width="1"/>
<polygon points="266.3,209.5 262.1,207.4 262.1,211.6" fill="#000"/>
<polyline points="257.8,218.3 266.3,218.3" fill="none" stroke="#6e6e6e" stroke-width="1"/>
<polygon points="266.3,218.3 262.1,216.2 262.1,220.4" fill="#000"/>
<polyline points="257.8,227.2 266.3,227.2" fill="none" stroke="#6e6e6e" stroke-width="1"/>
<polygon points="266.3,227.2 262.1,225.1 262.1,229.3" fill="#000"/>
<polygon points="200.2,210.7 223.8,210.7 230.0,214.4 223.8,218.1 200.2,218.1" fill="#fff" stroke="#555" stroke-width="0.8"/>
<text x="212.0" y="215.40" font-size="4.9" text-anchor="middle" fill="#333" font-weight="normal" dominant-baseline="central" textLength="22.15" lengthAdjust="spacingAndGlyphs" stroke="#333" stroke-width="0.1">adc0_pol1</text>
<polyline points="230.0,214.4 239.8,214.4" fill="none" stroke="#6e6e6e" stroke-width="1"/>
<polygon points="239.8,214.4 235.6,212.3 235.6,216.5" fill="#000"/>
<text x="248.8" y="235.60" font-size="5.04" text-anchor="middle" fill="#333" font-weight="normal" dominant-baseline="central" textLength="40.29" lengthAdjust="spacingAndGlyphs" stroke="#333" stroke-width="0.1">adc0_pol1_unpack1</text>
<rect x="266.3" y="170.5" width="44.7" height="60.0" fill="#80ff80" stroke="#555" stroke-width="0.8"/>
<rect x="267.1" y="226.9" width="2.8" height="2.8" fill="#e8ffe8" stroke="#888" stroke-width="0.4"/>
<text x="267.5" y="174.60" font-size="4.37" text-anchor="start" fill="#222" font-weight="normal" dominant-baseline="central" textLength="8.02" lengthAdjust="spacingAndGlyphs" stroke="#222" stroke-width="0.1">sync</text>
<text x="267.5" y="183.30" font-size="4.37" text-anchor="start" fill="#222" font-weight="normal" dominant-baseline="central" textLength="9.32" lengthAdjust="spacingAndGlyphs" stroke="#222" stroke-width="0.1">delay</text>
<text x="267.5" y="192.20" font-size="4.37" text-anchor="start" fill="#222" font-weight="normal" dominant-baseline="central" textLength="4.34" lengthAdjust="spacingAndGlyphs" stroke="#222" stroke-width="0.1">en</text>
<text x="267.5" y="201.10" font-size="4.37" text-anchor="start" fill="#222" font-weight="normal" dominant-baseline="central" textLength="14.96" lengthAdjust="spacingAndGlyphs" stroke="#222" stroke-width="0.1">data_in1</text>
<text x="267.5" y="210.00" font-size="4.37" text-anchor="start" fill="#222" font-weight="normal" dominant-baseline="central" textLength="14.96" lengthAdjust="spacingAndGlyphs" stroke="#222" stroke-width="0.1">data_in2</text>
<text x="267.5" y="218.80" font-size="4.37" text-anchor="start" fill="#222" font-weight="normal" dominant-baseline="central" textLength="14.96" lengthAdjust="spacingAndGlyphs" stroke="#222" stroke-width="0.1">data_in3</text>
<text x="267.5" y="227.70" font-size="4.37" text-anchor="start" fill="#222" font-weight="normal" dominant-baseline="central" textLength="14.96" lengthAdjust="spacingAndGlyphs" stroke="#222" stroke-width="0.1">data_in4</text>
<text x="309.8" y="179.20" font-size="4.37" text-anchor="end" fill="#222" font-weight="normal" dominant-baseline="central" textLength="15.61" lengthAdjust="spacingAndGlyphs" stroke="#222" stroke-width="0.1">sync_out</text>
<text x="309.8" y="189.80" font-size="4.37" text-anchor="end" fill="#222" font-weight="normal" dominant-baseline="central" textLength="17.35" lengthAdjust="spacingAndGlyphs" stroke="#222" stroke-width="0.1">data_out1</text>
<text x="309.8" y="201.20" font-size="4.37" text-anchor="end" fill="#222" font-weight="normal" dominant-baseline="central" textLength="17.35" lengthAdjust="spacingAndGlyphs" stroke="#222" stroke-width="0.1">data_out2</text>
<text x="309.8" y="212.00" font-size="4.37" text-anchor="end" fill="#222" font-weight="normal" dominant-baseline="central" textLength="17.35" lengthAdjust="spacingAndGlyphs" stroke="#222" stroke-width="0.1">data_out3</text>
<text x="309.8" y="223.20" font-size="4.37" text-anchor="end" fill="#222" font-weight="normal" dominant-baseline="central" textLength="17.35" lengthAdjust="spacingAndGlyphs" stroke="#222" stroke-width="0.1">data_out4</text>
<text x="288.6" y="235.20" font-size="5.04" text-anchor="middle" fill="#333" font-weight="normal" dominant-baseline="central" textLength="29.27" lengthAdjust="spacingAndGlyphs" stroke="#333" stroke-width="0.1">coarse_delay1</text>
<text x="288.6" y="239.90" font-size="3.7" text-anchor="middle" fill="#333" font-weight="normal" dominant-baseline="central" textLength="18.43" lengthAdjust="spacingAndGlyphs" stroke="#333" stroke-width="0.16">Min Delay=7</text>
<polyline points="311.0,178.7 335.4,178.7" fill="none" stroke="#6e6e6e" stroke-width="1"/>
<polygon points="335.4,178.7 331.2,176.6 331.2,180.8" fill="#000"/>
<polyline points="311.0,189.3 335.4,189.3" fill="none" stroke="#6e6e6e" stroke-width="1"/>
<polygon points="335.4,189.3 331.2,187.2 331.2,191.4" fill="#000"/>
<polyline points="311.0,200.7 335.4,200.7" fill="none" stroke="#6e6e6e" stroke-width="1"/>
<polygon points="335.4,200.7 331.2,198.6 331.2,202.8" fill="#000"/>
<polyline points="311.0,211.5 335.4,211.5" fill="none" stroke="#6e6e6e" stroke-width="1"/>
<polygon points="335.4,211.5 331.2,209.4 331.2,213.6" fill="#000"/>
<polyline points="311.0,222.7 335.4,222.7" fill="none" stroke="#6e6e6e" stroke-width="1"/>
<polygon points="335.4,222.7 331.2,220.6 331.2,224.8" fill="#000"/>
<rect x="335.4" y="170.5" width="41.6" height="60.0" fill="#80ff80" stroke="#555" stroke-width="0.8"/>
<rect x="336.2" y="226.9" width="2.8" height="2.8" fill="#e8ffe8" stroke="#888" stroke-width="0.4"/>
<text x="336.6" y="179.20" font-size="4.37" text-anchor="start" fill="#222" font-weight="normal" dominant-baseline="central" textLength="8.02" lengthAdjust="spacingAndGlyphs" stroke="#222" stroke-width="0.1">sync</text>
<text x="336.6" y="189.80" font-size="4.37" text-anchor="start" fill="#222" font-weight="normal" dominant-baseline="central" textLength="7.37" lengthAdjust="spacingAndGlyphs" stroke="#222" stroke-width="0.1">din1</text>
<text x="336.6" y="201.20" font-size="4.37" text-anchor="start" fill="#222" font-weight="normal" dominant-baseline="central" textLength="7.37" lengthAdjust="spacingAndGlyphs" stroke="#222" stroke-width="0.1">din2</text>
<text x="336.6" y="212.00" font-size="4.37" text-anchor="start" fill="#222" font-weight="normal" dominant-baseline="central" textLength="7.37" lengthAdjust="spacingAndGlyphs" stroke="#222" stroke-width="0.1">din3</text>
<text x="336.6" y="223.20" font-size="4.37" text-anchor="start" fill="#222" font-weight="normal" dominant-baseline="central" textLength="7.37" lengthAdjust="spacingAndGlyphs" stroke="#222" stroke-width="0.1">din4</text>
<text x="375.8" y="174.30" font-size="4.37" text-anchor="end" fill="#222" font-weight="normal" dominant-baseline="central" textLength="15.61" lengthAdjust="spacingAndGlyphs" stroke="#222" stroke-width="0.1">sync_out</text>
<text x="375.8" y="181.00" font-size="4.37" text-anchor="end" fill="#222" font-weight="normal" dominant-baseline="central" textLength="8.67" lengthAdjust="spacingAndGlyphs" stroke="#222" stroke-width="0.1">real1</text>
<text x="375.8" y="187.70" font-size="4.37" text-anchor="end" fill="#222" font-weight="normal" dominant-baseline="central" textLength="10.62" lengthAdjust="spacingAndGlyphs" stroke="#222" stroke-width="0.1">imag1</text>
<text x="375.8" y="194.40" font-size="4.37" text-anchor="end" fill="#222" font-weight="normal" dominant-baseline="central" textLength="8.67" lengthAdjust="spacingAndGlyphs" stroke="#222" stroke-width="0.1">real2</text>
<text x="375.8" y="201.10" font-size="4.37" text-anchor="end" fill="#222" font-weight="normal" dominant-baseline="central" textLength="10.62" lengthAdjust="spacingAndGlyphs" stroke="#222" stroke-width="0.1">imag2</text>
<text x="375.8" y="207.80" font-size="4.37" text-anchor="end" fill="#222" font-weight="normal" dominant-baseline="central" textLength="8.67" lengthAdjust="spacingAndGlyphs" stroke="#222" stroke-width="0.1">real3</text>
<text x="375.8" y="214.50" font-size="4.37" text-anchor="end" fill="#222" font-weight="normal" dominant-baseline="central" textLength="10.62" lengthAdjust="spacingAndGlyphs" stroke="#222" stroke-width="0.1">imag3</text>
<text x="375.8" y="221.20" font-size="4.37" text-anchor="end" fill="#222" font-weight="normal" dominant-baseline="central" textLength="8.67" lengthAdjust="spacingAndGlyphs" stroke="#222" stroke-width="0.1">real4</text>
<text x="375.8" y="227.90" font-size="4.37" text-anchor="end" fill="#222" font-weight="normal" dominant-baseline="central" textLength="10.62" lengthAdjust="spacingAndGlyphs" stroke="#222" stroke-width="0.1">imag4</text>
<text x="357.0" y="235.20" font-size="5.04" text-anchor="middle" fill="#333" font-weight="normal" dominant-baseline="central" textLength="13.5" lengthAdjust="spacingAndGlyphs" stroke="#333" stroke-width="0.1">mixer1</text>
<text x="357.0" y="239.90" font-size="3.7" text-anchor="middle" fill="#333" font-weight="normal" dominant-baseline="central" textLength="14.95" lengthAdjust="spacingAndGlyphs" stroke="#333" stroke-width="0.16">lo af =0dB</text>
<polyline points="377.0,173.8 403.2,173.8" fill="none" stroke="#6e6e6e" stroke-width="1"/>
<polygon points="403.2,173.8 399.0,171.7 399.0,175.9" fill="#000"/>
<polyline points="377.0,180.5 403.2,180.5" fill="none" stroke="#6e6e6e" stroke-width="1"/>
<polygon points="403.2,180.5 399.0,178.4 399.0,182.6" fill="#000"/>
<polyline points="377.0,187.2 403.2,187.2" fill="none" stroke="#6e6e6e" stroke-width="1"/>
<polygon points="403.2,187.2 399.0,185.1 399.0,189.3" fill="#000"/>
<polyline points="377.0,193.9 403.2,193.9" fill="none" stroke="#6e6e6e" stroke-width="1"/>
<polygon points="403.2,193.9 399.0,191.8 399.0,196.0" fill="#000"/>
<polyline points="377.0,200.6 403.2,200.6" fill="none" stroke="#6e6e6e" stroke-width="1"/>
<polygon points="403.2,200.6 399.0,198.5 399.0,202.7" fill="#000"/>
<polyline points="377.0,207.3 403.2,207.3" fill="none" stroke="#6e6e6e" stroke-width="1"/>
<polygon points="403.2,207.3 399.0,205.2 399.0,209.4" fill="#000"/>
<polyline points="377.0,214.0 403.2,214.0" fill="none" stroke="#6e6e6e" stroke-width="1"/>
<polygon points="403.2,214.0 399.0,211.9 399.0,216.1" fill="#000"/>
<polyline points="377.0,220.7 403.2,220.7" fill="none" stroke="#6e6e6e" stroke-width="1"/>
<polygon points="403.2,220.7 399.0,218.6 399.0,222.8" fill="#000"/>
<polyline points="377.0,227.4 403.2,227.4" fill="none" stroke="#6e6e6e" stroke-width="1"/>
<polygon points="403.2,227.4 399.0,225.3 399.0,229.5" fill="#000"/>
<rect x="403.2" y="169.5" width="44.8" height="61.0" fill="#80ff80" stroke="#555" stroke-width="0.8"/>
<rect x="404.0" y="226.9" width="2.8" height="2.8" fill="#e8ffe8" stroke="#888" stroke-width="0.4"/>
<text x="404.4" y="174.30" font-size="4.37" text-anchor="start" fill="#222" font-weight="normal" dominant-baseline="central" textLength="13.22" lengthAdjust="spacingAndGlyphs" stroke="#222" stroke-width="0.1">sync_in</text>
<text x="404.4" y="181.00" font-size="4.37" text-anchor="start" fill="#222" font-weight="normal" dominant-baseline="central" textLength="8.67" lengthAdjust="spacingAndGlyphs" stroke="#222" stroke-width="0.1">real1</text>
<text x="404.4" y="187.70" font-size="4.37" text-anchor="start" fill="#222" font-weight="normal" dominant-baseline="central" textLength="10.62" lengthAdjust="spacingAndGlyphs" stroke="#222" stroke-width="0.1">imag1</text>
<text x="404.4" y="194.40" font-size="4.37" text-anchor="start" fill="#222" font-weight="normal" dominant-baseline="central" textLength="8.67" lengthAdjust="spacingAndGlyphs" stroke="#222" stroke-width="0.1">real2</text>
<text x="404.4" y="201.10" font-size="4.37" text-anchor="start" fill="#222" font-weight="normal" dominant-baseline="central" textLength="10.62" lengthAdjust="spacingAndGlyphs" stroke="#222" stroke-width="0.1">imag2</text>
<text x="404.4" y="207.80" font-size="4.37" text-anchor="start" fill="#222" font-weight="normal" dominant-baseline="central" textLength="8.67" lengthAdjust="spacingAndGlyphs" stroke="#222" stroke-width="0.1">real3</text>
<text x="404.4" y="214.50" font-size="4.37" text-anchor="start" fill="#222" font-weight="normal" dominant-baseline="central" textLength="10.62" lengthAdjust="spacingAndGlyphs" stroke="#222" stroke-width="0.1">imag3</text>
<text x="404.4" y="221.20" font-size="4.37" text-anchor="start" fill="#222" font-weight="normal" dominant-baseline="central" textLength="8.67" lengthAdjust="spacingAndGlyphs" stroke="#222" stroke-width="0.1">real4</text>
<text x="404.4" y="227.90" font-size="4.37" text-anchor="start" fill="#222" font-weight="normal" dominant-baseline="central" textLength="10.62" lengthAdjust="spacingAndGlyphs" stroke="#222" stroke-width="0.1">imag4</text>
<text x="446.8" y="186.00" font-size="4.37" text-anchor="end" fill="#222" font-weight="normal" dominant-baseline="central" textLength="15.61" lengthAdjust="spacingAndGlyphs" stroke="#222" stroke-width="0.1">sync_out</text>
<text x="446.8" y="216.60" font-size="4.37" text-anchor="end" fill="#222" font-weight="normal" dominant-baseline="central" textLength="7.59" lengthAdjust="spacingAndGlyphs" stroke="#222" stroke-width="0.1">dout</text>
<text x="425.6" y="235.30" font-size="5.04" text-anchor="middle" fill="#333" font-weight="normal" dominant-baseline="central" textLength="16.01" lengthAdjust="spacingAndGlyphs" stroke="#333" stroke-width="0.1">dec_fir1</text>
<text x="425.6" y="240.20" font-size="3.7" text-anchor="middle" fill="#333" font-weight="normal" dominant-baseline="central" textLength="11.5" lengthAdjust="spacingAndGlyphs" stroke="#333" stroke-width="0.16">68 Taps</text>
<text x="425.6" y="244.60" font-size="3.7" text-anchor="middle" fill="#333" font-weight="normal" dominant-baseline="central" textLength="12.85" lengthAdjust="spacingAndGlyphs" stroke="#333" stroke-width="0.16">10_1718</text>
<polyline points="448.0,104.0 472.4,104.0 472.4,136.7 487.6,136.7" fill="none" stroke="#6e6e6e" stroke-width="1"/>
<polygon points="487.6,136.7 483.4,134.6 483.4,138.8" fill="#000"/>
<polyline points="448.0,134.6 466.5,134.6 466.5,158.8 487.6,158.8" fill="none" stroke="#6e6e6e" stroke-width="1"/>
<polygon points="487.6,158.8 483.4,156.7 483.4,160.9" fill="#000"/>
<polyline points="448.0,185.5 467.7,185.5" fill="none" stroke="#6e6e6e" stroke-width="1"/>
<polygon points="467.7,185.5 463.5,183.4 463.5,187.6" fill="#000"/>
<rect x="467.7" y="180.3" width="9.3" height="9.3" fill="#fff" stroke="#666" stroke-width="0.7"/>
<polyline points="470.0,183.1 474.2,183.1 474.2,186.8 470.0,186.8" fill="none" stroke="#555" stroke-width="0.6"/>
<polyline points="471.0,184.9 474.2,184.9" fill="none" stroke="#555" stroke-width="0.6"/>
<polyline points="448.0,216.1 479.0,216.1 479.0,181.3 487.6,181.3" fill="none" stroke="#6e6e6e" stroke-width="1"/>
<polygon points="487.6,181.3 483.4,179.2 483.4,183.4" fill="#000"/>
<rect x="476.7" y="94.2" width="13.3" height="13.4" fill="#fff" stroke="#777" stroke-width="0.8"/>
<text x="483.3" y="101.50" font-size="6.24" text-anchor="middle" fill="#333" font-weight="normal" dominant-baseline="central" textLength="11.57" lengthAdjust="spacingAndGlyphs" stroke="#333" stroke-width="0.1">4095</text>
<polyline points="490.0,101.0 498.7,101.0" fill="none" stroke="#6e6e6e" stroke-width="1"/>
<polygon points="498.7,101.0 494.5,98.9 494.5,103.1" fill="#000"/>
<rect x="498.7" y="93.9" width="17.9" height="13.7" fill="#ffff00" stroke="#666" stroke-width="0.8"/>
<rect x="499.3" y="104.4" width="2.8" height="2.8" fill="#f4f4f4" stroke="#777" stroke-width="0.4"/>
<polygon points="499.6,106.9 499.6,105.8 500.9,104.7 501.8,104.7 501.8,105.4 500.3,106.9" fill="#e02a2a"/>
<text x="509.0" y="101.30" font-size="3.7" text-anchor="middle" fill="#333" font-weight="normal" dominant-baseline="central" textLength="13.94" lengthAdjust="spacingAndGlyphs" stroke="#333" stroke-width="0.16">simple_in</text>
<polyline points="516.6,101.0 525.2,101.0" fill="none" stroke="#6e6e6e" stroke-width="1"/>
<polygon points="525.2,101.0 521.0,98.9 521.0,103.1" fill="#000"/>
<rect x="525.2" y="96.3" width="10.8" height="9.3" fill="#c6d3ec" stroke="#7d8aa3" stroke-width="0.8"/>
<text x="530.6" y="101.45" font-size="3.36" text-anchor="middle" fill="#223" font-weight="normal" dominant-baseline="central" textLength="5.84" lengthAdjust="spacingAndGlyphs" stroke="#223" stroke-width="0.16">[a:b]</text>
<text x="507.5" y="112.70" font-size="5.04" text-anchor="middle" fill="#333" font-weight="normal" dominant-baseline="central" textLength="14.42" lengthAdjust="spacingAndGlyphs" stroke="#333" stroke-width="0.1">fft_shift</text>
<polyline points="536.0,101.0 541.0,101.0 541.0,147.9 549.6,147.9" fill="none" stroke="#6e6e6e" stroke-width="1"/>
<polygon points="549.6,147.9 545.4,145.8 545.4,150.0" fill="#000"/>
<rect x="487.6" y="124.8" width="42.2" height="67.2" fill="#80ff80" stroke="#555" stroke-width="0.8"/>
<rect x="488.4" y="188.4" width="2.8" height="2.8" fill="#e8ffe8" stroke="#888" stroke-width="0.4"/>
<text x="488.8" y="137.20" font-size="4.37" text-anchor="start" fill="#222" font-weight="normal" dominant-baseline="central" textLength="8.02" lengthAdjust="spacingAndGlyphs" stroke="#222" stroke-width="0.1">sync</text>
<text x="488.8" y="159.30" font-size="4.37" text-anchor="start" fill="#222" font-weight="normal" dominant-baseline="central" textLength="14.75" lengthAdjust="spacingAndGlyphs" stroke="#222" stroke-width="0.1">pol1_in1</text>
<text x="488.8" y="181.80" font-size="4.37" text-anchor="start" fill="#222" font-weight="normal" dominant-baseline="central" textLength="14.75" lengthAdjust="spacingAndGlyphs" stroke="#222" stroke-width="0.1">pol2_in1</text>
<text x="528.6" y="137.00" font-size="4.37" text-anchor="end" fill="#222" font-weight="normal" dominant-baseline="central" textLength="15.61" lengthAdjust="spacingAndGlyphs" stroke="#222" stroke-width="0.1">sync_out</text>
<text x="528.6" y="159.30" font-size="4.37" text-anchor="end" fill="#222" font-weight="normal" dominant-baseline="central" textLength="17.13" lengthAdjust="spacingAndGlyphs" stroke="#222" stroke-width="0.1">pol1_out1</text>
<text x="528.6" y="181.80" font-size="4.37" text-anchor="end" fill="#222" font-weight="normal" dominant-baseline="central" textLength="17.13" lengthAdjust="spacingAndGlyphs" stroke="#222" stroke-width="0.1">pol2_out1</text>
<text x="508.3" y="196.70" font-size="5.04" text-anchor="middle" fill="#333" font-weight="normal" dominant-baseline="central" textLength="15.01" lengthAdjust="spacingAndGlyphs" stroke="#333" stroke-width="0.1">pfb_fir0</text>
<text x="508.3" y="200.90" font-size="3.7" text-anchor="middle" fill="#333" font-weight="normal" dominant-baseline="central" textLength="33.67" lengthAdjust="spacingAndGlyphs" stroke="#333" stroke-width="0.16">fwpoc0_adc_latency=1</text>
<text x="508.3" y="204.90" font-size="3.7" text-anchor="middle" fill="#333" font-weight="normal" dominant-baseline="central" textLength="24.03" lengthAdjust="spacingAndGlyphs" stroke="#333" stroke-width="0.16">Max scale 0.023</text>
<polyline points="529.8,136.5 543.5,136.5 543.5,132.8 549.6,132.8" fill="none" stroke="#6e6e6e" stroke-width="1"/>
<polygon points="549.6,132.8 545.4,130.7 545.4,134.9" fill="#000"/>
<polyline points="529.8,158.8 538.0,158.8 538.0,163.1 549.6,163.1" fill="none" stroke="#6e6e6e" stroke-width="1"/>
<polygon points="549.6,163.1 545.4,161.0 545.4,165.2" fill="#000"/>
<polyline points="529.8,181.3 532.0,181.3 532.0,178.3 549.6,178.3" fill="none" stroke="#6e6e6e" stroke-width="1"/>
<polygon points="549.6,178.3 545.4,176.2 545.4,180.4" fill="#000"/>
<rect x="549.6" y="122.2" width="31.0" height="66.3" fill="#80ff80" stroke="#555" stroke-width="0.8"/>
<rect x="550.4" y="184.9" width="2.8" height="2.8" fill="#e8ffe8" stroke="#888" stroke-width="0.4"/>
<text x="550.8" y="133.30" font-size="4.37" text-anchor="start" fill="#222" font-weight="normal" dominant-baseline="central" textLength="8.02" lengthAdjust="spacingAndGlyphs" stroke="#222" stroke-width="0.1">sync</text>
<text x="550.8" y="148.40" font-size="4.37" text-anchor="start" fill="#222" font-weight="normal" dominant-baseline="central" textLength="7.15" lengthAdjust="spacingAndGlyphs" stroke="#222" stroke-width="0.1">shift</text>
<text x="550.8" y="163.60" font-size="4.37" text-anchor="start" fill="#222" font-weight="normal" dominant-baseline="central" textLength="7.37" lengthAdjust="spacingAndGlyphs" stroke="#222" stroke-width="0.1">pol0</text>
<text x="550.8" y="178.80" font-size="4.37" text-anchor="start" fill="#222" font-weight="normal" dominant-baseline="central" textLength="7.37" lengthAdjust="spacingAndGlyphs" stroke="#222" stroke-width="0.1">pol1</text>
<text x="579.4" y="133.30" font-size="4.37" text-anchor="end" fill="#222" font-weight="normal" dominant-baseline="central" textLength="15.61" lengthAdjust="spacingAndGlyphs" stroke="#222" stroke-width="0.1">sync_out</text>
<text x="579.4" y="148.40" font-size="4.37" text-anchor="end" fill="#222" font-weight="normal" dominant-baseline="central" textLength="7.59" lengthAdjust="spacingAndGlyphs" stroke="#222" stroke-width="0.1">out0</text>
<text x="579.4" y="163.60" font-size="4.37" text-anchor="end" fill="#222" font-weight="normal" dominant-baseline="central" textLength="7.59" lengthAdjust="spacingAndGlyphs" stroke="#222" stroke-width="0.1">out1</text>
<text x="579.4" y="178.80" font-size="4.37" text-anchor="end" fill="#222" font-weight="normal" dominant-baseline="central" textLength="3.25" lengthAdjust="spacingAndGlyphs" stroke="#222" stroke-width="0.1">of</text>
<text x="565.0" y="193.70" font-size="5.04" text-anchor="middle" fill="#333" font-weight="normal" dominant-baseline="central" textLength="6.17" lengthAdjust="spacingAndGlyphs" stroke="#333" stroke-width="0.1">fft0</text>
<text x="565.0" y="197.80" font-size="3.7" text-anchor="middle" fill="#333" font-weight="normal" dominant-baseline="central" textLength="13.15" lengthAdjust="spacingAndGlyphs" stroke="#333" stroke-width="0.16">11 chans</text>
<text x="565.0" y="202.00" font-size="3.7" text-anchor="middle" fill="#333" font-weight="normal" dominant-baseline="central" textLength="10.46" lengthAdjust="spacingAndGlyphs" stroke="#333" stroke-width="0.16">(18,18)</text>
<text x="565.0" y="206.40" font-size="3.7" text-anchor="middle" fill="#333" font-weight="normal" dominant-baseline="central" textLength="47.27" lengthAdjust="spacingAndGlyphs" stroke="#333" stroke-width="0.16">Round  (unbiased: Even Values)</text>
<text x="565.0" y="210.70" font-size="3.7" text-anchor="middle" fill="#333" font-weight="normal" dominant-baseline="central" textLength="7.82" lengthAdjust="spacingAndGlyphs" stroke="#333" stroke-width="0.16">Wrap</text>
<polyline points="580.6,132.8 582.8,132.8 582.8,141.0 638.0,141.0" fill="none" stroke="#6e6e6e" stroke-width="1"/>
<polygon points="638.0,141.0 633.8,138.9 633.8,143.1" fill="#000"/>
<polyline points="602.5,141.0 602.5,72.8 635.4,72.8" fill="none" stroke="#6e6e6e" stroke-width="1"/>
<polygon points="635.4,72.8 631.2,70.7 631.2,74.9" fill="#000"/>
<polyline points="580.6,147.9 607.2,147.9 607.2,94.8 635.4,94.8" fill="none" stroke="#6e6e6e" stroke-width="1"/>
<polygon points="635.4,94.8 631.2,92.7 631.2,96.9" fill="#000"/>
<polyline points="607.2,118.9 635.4,118.9" fill="none" stroke="#6e6e6e" stroke-width="1"/>
<polygon points="635.4,118.9 631.2,116.8 631.2,121.0" fill="#000"/>
<circle cx="607.2" cy="118.9" r="0.9" fill="#333"/>
<polygon points="635.4,118.6 638.4,115.2 657.6,115.2 657.6,122.0 638.4,122.0" fill="#fff" stroke="#555" stroke-width="0.8"/>
<text x="648.0" y="119.60" font-size="4.9" text-anchor="middle" fill="#333" font-weight="normal" dominant-baseline="central" textLength="15.93" lengthAdjust="spacingAndGlyphs" stroke="#333" stroke-width="0.1">fft_out0</text>
<polyline points="580.6,163.1 638.0,163.1" fill="none" stroke="#6e6e6e" stroke-width="1"/>
<polygon points="638.0,163.1 633.8,161.0 633.8,165.2" fill="#000"/>
<polyline points="602.5,163.1 602.5,152.4 610.3,152.4" fill="none" stroke="#6e6e6e" stroke-width="1"/>
<polygon points="610.3,152.4 606.1,150.3 606.1,154.5" fill="#000"/>
<circle cx="602.5" cy="163.1" r="0.9" fill="#333"/>
<polygon points="610.3,152.4 613.3,149.3 631.6,149.3 631.6,155.5 613.3,155.5" fill="#fff" stroke="#555" stroke-width="0.8"/>
<text x="622.5" y="153.40" font-size="4.9" text-anchor="middle" fill="#333" font-weight="normal" dominant-baseline="central" textLength="15.93" lengthAdjust="spacingAndGlyphs" stroke="#333" stroke-width="0.1">fft_out1</text>
<polyline points="580.6,178.3 603.0,178.3" fill="none" stroke="#6e6e6e" stroke-width="1"/>
<polygon points="603.0,178.3 598.8,176.2 598.8,180.4" fill="#000"/>
<polygon points="603.0,178.3 606.5,175.7 626.8,175.7 626.8,180.9 606.5,180.9" fill="#fff" stroke="#555" stroke-width="0.8"/>
<text x="616.7" y="179.30" font-size="4.9" text-anchor="middle" fill="#333" font-weight="normal" dominant-baseline="central" textLength="18.59" lengthAdjust="spacingAndGlyphs" stroke="#333" stroke-width="0.1">fft_over0</text>
<polyline points="589.2,178.3 589.2,187.5 603.0,187.5" fill="none" stroke="#6e6e6e" stroke-width="1"/>
<polygon points="603.0,187.5 598.8,185.4 598.8,189.6" fill="#000"/>
<circle cx="589.2" cy="178.3" r="0.9" fill="#333"/>
<polygon points="603.0,187.5 606.5,184.9 626.8,184.9 626.8,190.1 606.5,190.1" fill="#fff" stroke="#555" stroke-width="0.8"/>
<text x="616.7" y="188.50" font-size="4.9" text-anchor="middle" fill="#333" font-weight="normal" dominant-baseline="central" textLength="18.59" lengthAdjust="spacingAndGlyphs" stroke="#333" stroke-width="0.1">fft_over1</text>
<rect x="635.4" y="60.0" width="27.3" height="46.0" fill="#fff" stroke="#777" stroke-width="0.8"/>
<text x="636.6" y="73.30" font-size="4.37" text-anchor="start" fill="#222" font-weight="normal" dominant-baseline="central" textLength="8.02" lengthAdjust="spacingAndGlyphs" stroke="#222" stroke-width="0.1">sync</text>
<text x="636.6" y="95.30" font-size="4.37" text-anchor="start" fill="#222" font-weight="normal" dominant-baseline="central" textLength="7.37" lengthAdjust="spacingAndGlyphs" stroke="#222" stroke-width="0.1">din0</text>
<text x="661.5" y="68.70" font-size="4.37" text-anchor="end" fill="#222" font-weight="normal" dominant-baseline="central" textLength="15.61" lengthAdjust="spacingAndGlyphs" stroke="#222" stroke-width="0.1">sync_out</text>
<text x="661.5" y="83.90" font-size="4.37" text-anchor="end" fill="#222" font-weight="normal" dominant-baseline="central" textLength="13.44" lengthAdjust="spacingAndGlyphs" stroke="#222" stroke-width="0.1">clip_out</text>
<text x="661.5" y="99.30" font-size="4.37" text-anchor="end" fill="#222" font-weight="normal" dominant-baseline="central" textLength="9.76" lengthAdjust="spacingAndGlyphs" stroke="#222" stroke-width="0.1">dout0</text>
<text x="649.0" y="111.20" font-size="5.04" text-anchor="middle" fill="#333" font-weight="normal" dominant-baseline="central" textLength="13.76" lengthAdjust="spacingAndGlyphs" stroke="#333" stroke-width="0.1">quant0</text>
<polyline points="662.7,68.2 677.0,68.2" fill="none" stroke="#6e6e6e" stroke-width="1"/>
<polygon points="677.0,68.2 672.8,66.1 672.8,70.3" fill="#000"/>
<polygon points="677.0,68.0 687.4,64.4 716.0,64.4 716.0,71.5 687.4,71.5" fill="#fff" stroke="#555" stroke-width="0.8"/>
<text x="701.7" y="68.95" font-size="4.9" text-anchor="middle" fill="#333" font-weight="normal" dominant-baseline="central" textLength="19.48" lengthAdjust="spacingAndGlyphs" stroke="#333" stroke-width="0.1">sync_rnd</text>
<polyline points="662.7,83.4 677.0,83.4" fill="none" stroke="#6e6e6e" stroke-width="1"/>
<polygon points="677.0,83.4 672.8,81.3 672.8,85.5" fill="#000"/>
<rect x="677.0" y="78.6" width="10.2" height="9.4" fill="#fff" stroke="#666" stroke-width="0.7"/>
<polyline points="679.5,81.4 684.1,81.4 684.1,85.2 679.5,85.2" fill="none" stroke="#555" stroke-width="0.6"/>
<polyline points="680.6,83.3 684.1,83.3" fill="none" stroke="#555" stroke-width="0.6"/>
<polyline points="662.7,98.8 677.0,98.8" fill="none" stroke="#6e6e6e" stroke-width="1"/>
<polygon points="677.0,98.8 672.8,96.7 672.8,100.9" fill="#000"/>
<polygon points="677.0,99.0 687.4,95.5 716.0,95.5 716.0,102.6 687.4,102.6" fill="#fff" stroke="#555" stroke-width="0.8"/>
<text x="701.7" y="100.05" font-size="4.9" text-anchor="middle" fill="#333" font-weight="normal" dominant-baseline="central" textLength="8.01" lengthAdjust="spacingAndGlyphs" stroke="#333" stroke-width="0.1">eq0</text>
<rect x="638.0" y="128.9" width="26.5" height="46.8" fill="#fff" stroke="#777" stroke-width="0.8"/>
<text x="639.2" y="141.50" font-size="4.37" text-anchor="start" fill="#222" font-weight="normal" dominant-baseline="central" textLength="8.02" lengthAdjust="spacingAndGlyphs" stroke="#222" stroke-width="0.1">sync</text>
<text x="639.2" y="163.60" font-size="4.37" text-anchor="start" fill="#222" font-weight="normal" dominant-baseline="central" textLength="7.37" lengthAdjust="spacingAndGlyphs" stroke="#222" stroke-width="0.1">din0</text>
<text x="663.3" y="137.20" font-size="4.37" text-anchor="end" fill="#222" font-weight="normal" dominant-baseline="central" textLength="15.61" lengthAdjust="spacingAndGlyphs" stroke="#222" stroke-width="0.1">sync_out</text>
<text x="663.3" y="152.40" font-size="4.37" text-anchor="end" fill="#222" font-weight="normal" dominant-baseline="central" textLength="13.44" lengthAdjust="spacingAndGlyphs" stroke="#222" stroke-width="0.1">clip_out</text>
<text x="663.3" y="167.80" font-size="4.37" text-anchor="end" fill="#222" font-weight="normal" dominant-baseline="central" textLength="9.76" lengthAdjust="spacingAndGlyphs" stroke="#222" stroke-width="0.1">dout0</text>
<text x="651.0" y="179.80" font-size="5.04" text-anchor="middle" fill="#333" font-weight="normal" dominant-baseline="central" textLength="13.76" lengthAdjust="spacingAndGlyphs" stroke="#333" stroke-width="0.1">quant1</text>
<polyline points="664.5,136.7 680.4,136.7" fill="none" stroke="#6e6e6e" stroke-width="1"/>
<polygon points="680.4,136.7 676.2,134.6 676.2,138.8" fill="#000"/>
<rect x="680.4" y="132.2" width="8.6" height="8.8" fill="#fff" stroke="#666" stroke-width="0.7"/>
<polyline points="682.5,134.8 686.4,134.8 686.4,138.4 682.5,138.4" fill="none" stroke="#555" stroke-width="0.6"/>
<polyline points="683.4,136.6 686.4,136.6" fill="none" stroke="#555" stroke-width="0.6"/>
<polyline points="664.5,151.9 679.6,151.9" fill="none" stroke="#6e6e6e" stroke-width="1"/>
<polygon points="679.6,151.9 675.4,149.8 675.4,154.0" fill="#000"/>
<polygon points="679.6,152.0 689.5,148.8 717.6,148.8 717.6,155.2 689.5,155.2" fill="#fff" stroke="#555" stroke-width="0.8"/>
<text x="703.5" y="153.00" font-size="4.9" text-anchor="middle" fill="#333" font-weight="normal" dominant-baseline="central" textLength="17.88" lengthAdjust="spacingAndGlyphs" stroke="#333" stroke-width="0.1">eq_clip1</text>
<polyline points="664.5,167.3 679.6,167.3" fill="none" stroke="#6e6e6e" stroke-width="1"/>
<polygon points="679.6,167.3 675.4,165.2 675.4,169.4" fill="#000"/>
<polygon points="679.6,167.4 689.5,164.0 717.6,164.0 717.6,170.8 689.5,170.8" fill="#fff" stroke="#555" stroke-width="0.8"/>
<text x="703.5" y="168.40" font-size="4.9" text-anchor="middle" fill="#333" font-weight="normal" dominant-baseline="central" textLength="8.01" lengthAdjust="spacingAndGlyphs" stroke="#333" stroke-width="0.1">eq1</text>
<text x="665.0" y="194.50" font-size="5.04" text-anchor="middle" fill="#333" font-weight="normal" dominant-baseline="central" textLength="57.29" lengthAdjust="spacingAndGlyphs" stroke="#333" stroke-width="0.1">*Simplified the quant module</text>
<text x="665.0" y="199.70" font-size="5.04" text-anchor="middle" fill="#333" font-weight="normal" dominant-baseline="central" textLength="42.19" lengthAdjust="spacingAndGlyphs" stroke="#333" stroke-width="0.1">*Mod FFT to 4096 ch</text>
<text x="665.0" y="205.10" font-size="5.04" text-anchor="middle" fill="#333" font-weight="normal" dominant-baseline="central" textLength="30.03" lengthAdjust="spacingAndGlyphs" stroke="#333" stroke-width="0.1">313_20120618</text>
<rect x="12.5" y="240.3" width="8.1" height="9.4" fill="#fff" stroke="#777" stroke-width="0.8"/>
<text x="16.5" y="245.50" font-size="6.0" text-anchor="middle" fill="#333" font-weight="normal" dominant-baseline="central" textLength="2.78" lengthAdjust="spacingAndGlyphs" stroke="#333" stroke-width="0.1">0</text>
<polyline points="20.6,244.4 29.7,244.4" fill="none" stroke="#6e6e6e" stroke-width="1"/>
<polygon points="29.7,244.4 25.5,242.3 25.5,246.5" fill="#000"/>
<rect x="29.7" y="237.8" width="44.7" height="14.1" fill="#ffff00" stroke="#666" stroke-width="0.8"/>
<rect x="30.3" y="248.7" width="2.8" height="2.8" fill="#f4f4f4" stroke="#777" stroke-width="0.4"/>
<polygon points="30.6,251.2 30.6,250.1 31.9,249.0 32.8,249.0 32.8,249.7 31.3,251.2" fill="#e02a2a"/>
<text x="31.0" y="245.80" font-size="4.14" text-anchor="start" fill="#333" font-weight="normal" dominant-baseline="central" textLength="10.69" lengthAdjust="spacingAndGlyphs" stroke="#333" stroke-width="0.1">sim_in</text>
<text x="73.0" y="245.80" font-size="4.14" text-anchor="end" fill="#333" font-weight="normal" dominant-baseline="central" textLength="10.29" lengthAdjust="spacingAndGlyphs" stroke="#333" stroke-width="0.1">reg_in</text>
<text x="52.0" y="256.50" font-size="5.04" text-anchor="middle" fill="#333" font-weight="normal" dominant-baseline="central" textLength="6.0" lengthAdjust="spacingAndGlyphs" stroke="#333" stroke-width="0.1">ctrl</text>
<polyline points="74.4,244.4 85.0,244.4" fill="none" stroke="#6e6e6e" stroke-width="1"/>
<polyline points="85.0,244.4 85.0,282.6" fill="none" stroke="#6e6e6e" stroke-width="1"/>
<circle cx="85.0" cy="244.4" r="0.9" fill="#333"/>
<polyline points="85.0,244.4 96.6,244.4" fill="none" stroke="#6e6e6e" stroke-width="1"/>
<polygon points="96.6,244.4 92.4,242.3 92.4,246.5" fill="#000"/>
<rect x="96.6" y="240.8" width="13.0" height="7.2" fill="#c6d3ec" stroke="#7d8aa3" stroke-width="0.8"/>
<text x="103.1" y="244.90" font-size="4.03" text-anchor="middle" fill="#223" font-weight="normal" dominant-baseline="central" textLength="7.0" lengthAdjust="spacingAndGlyphs" stroke="#223" stroke-width="0.1">[a:b]</text>
<polyline points="109.6,244.4 122.6,244.4" fill="none" stroke="#6e6e6e" stroke-width="1"/>
<polygon points="122.6,244.4 118.4,242.3 118.4,246.5" fill="#000"/>
<rect x="122.6" y="240.4" width="16.0" height="8.0" fill="#fff" stroke="#777" stroke-width="0.8"/>
<rect x="123.0" y="245.3" width="2.8" height="2.8" fill="#f4f4f4" stroke="#777" stroke-width="0.4"/>
<polygon points="123.3,247.8 123.3,246.7 124.6,245.6 125.5,245.6 125.5,246.3 124.0,247.8" fill="#e02a2a"/>
<text x="137.0" y="245.20" font-size="4.48" text-anchor="end" fill="#333" font-weight="normal" dominant-baseline="central" textLength="6.45" lengthAdjust="spacingAndGlyphs" stroke="#333" stroke-width="0.1">Out</text>
<polyline points="138.6,244.4 147.0,244.4" fill="none" stroke="#6e6e6e" stroke-width="1"/>
<polygon points="147.0,244.4 142.8,242.3 142.8,246.5" fill="#000"/>
<rect x="147.0" y="240.4" width="6.9" height="8.0" fill="#c6d3ec" stroke="#7d8aa3" stroke-width="0.8"/>
<text x="150.4" y="244.90" font-size="3.92" text-anchor="middle" fill="#223" font-weight="normal" dominant-baseline="central" textLength="1.17" lengthAdjust="spacingAndGlyphs" stroke="#223" stroke-width="0.16">¹</text>
<polyline points="153.6,244.4 165.0,244.4" fill="none" stroke="#6e6e6e" stroke-width="1"/>
<polygon points="165.0,244.4 160.8,242.3 160.8,246.5" fill="#000"/>
<polygon points="165.0,244.4 177.0,240.4 213.4,240.4 213.4,248.4 177.0,248.4" fill="#fff" stroke="#555" stroke-width="0.8"/>
<text x="195.2" y="245.40" font-size="4.9" text-anchor="middle" fill="#333" font-weight="normal" dominant-baseline="central" textLength="24.28" lengthAdjust="spacingAndGlyphs" stroke="#333" stroke-width="0.1">cd_tr_arm0</text>
<text x="221.5" y="244.90" font-size="5.28" text-anchor="middle" fill="#333" font-weight="normal" dominant-baseline="central" textLength="2.67" lengthAdjust="spacingAndGlyphs" stroke="#333" stroke-width="0.1">0</text>
<polyline points="85.0,254.0 96.6,254.0" fill="none" stroke="#6e6e6e" stroke-width="1"/>
<polygon points="96.6,254.0 92.4,251.9 92.4,256.1" fill="#000"/>
<rect x="96.6" y="250.4" width="13.0" height="7.2" fill="#c6d3ec" stroke="#7d8aa3" stroke-width="0.8"/>
<text x="103.1" y="254.50" font-size="4.03" text-anchor="middle" fill="#223" font-weight="normal" dominant-baseline="central" textLength="7.0" lengthAdjust="spacingAndGlyphs" stroke="#223" stroke-width="0.1">[a:b]</text>
<polyline points="109.6,254.0 122.6,254.0" fill="none" stroke="#6e6e6e" stroke-width="1"/>
<polygon points="122.6,254.0 118.4,251.9 118.4,256.1" fill="#000"/>
<rect x="122.6" y="250.0" width="16.0" height="8.0" fill="#fff" stroke="#777" stroke-width="0.8"/>
<rect x="123.0" y="254.9" width="2.8" height="2.8" fill="#f4f4f4" stroke="#777" stroke-width="0.4"/>
<polygon points="123.3,257.4 123.3,256.3 124.6,255.2 125.5,255.2 125.5,255.9 124.0,257.4" fill="#e02a2a"/>
<text x="137.0" y="254.80" font-size="4.48" text-anchor="end" fill="#333" font-weight="normal" dominant-baseline="central" textLength="6.45" lengthAdjust="spacingAndGlyphs" stroke="#333" stroke-width="0.1">Out</text>
<polyline points="138.6,254.0 147.0,254.0" fill="none" stroke="#6e6e6e" stroke-width="1"/>
<polygon points="147.0,254.0 142.8,251.9 142.8,256.1" fill="#000"/>
<rect x="147.0" y="250.0" width="6.9" height="8.0" fill="#c6d3ec" stroke="#7d8aa3" stroke-width="0.8"/>
<text x="150.4" y="254.50" font-size="3.92" text-anchor="middle" fill="#223" font-weight="normal" dominant-baseline="central" textLength="1.17" lengthAdjust="spacingAndGlyphs" stroke="#223" stroke-width="0.16">¹</text>
<polyline points="153.6,254.0 165.0,254.0" fill="none" stroke="#6e6e6e" stroke-width="1"/>
<polygon points="165.0,254.0 160.8,251.9 160.8,256.1" fill="#000"/>
<polygon points="165.0,254.0 177.0,250.0 213.4,250.0 213.4,258.0 177.0,258.0" fill="#fff" stroke="#555" stroke-width="0.8"/>
<text x="195.2" y="255.00" font-size="4.9" text-anchor="middle" fill="#333" font-weight="normal" dominant-baseline="central" textLength="24.28" lengthAdjust="spacingAndGlyphs" stroke="#333" stroke-width="0.1">cd_tr_arm1</text>
<text x="221.5" y="254.50" font-size="5.28" text-anchor="middle" fill="#333" font-weight="normal" dominant-baseline="central" textLength="2.67" lengthAdjust="spacingAndGlyphs" stroke="#333" stroke-width="0.1">1</text>
<polyline points="85.0,265.0 96.6,265.0" fill="none" stroke="#6e6e6e" stroke-width="1"/>
<polygon points="96.6,265.0 92.4,262.9 92.4,267.1" fill="#000"/>
<rect x="96.6" y="261.4" width="13.0" height="7.2" fill="#c6d3ec" stroke="#7d8aa3" stroke-width="0.8"/>
<text x="103.1" y="265.50" font-size="4.03" text-anchor="middle" fill="#223" font-weight="normal" dominant-baseline="central" textLength="7.0" lengthAdjust="spacingAndGlyphs" stroke="#223" stroke-width="0.1">[a:b]</text>
<polyline points="109.6,265.0 122.6,265.0" fill="none" stroke="#6e6e6e" stroke-width="1"/>
<polygon points="122.6,265.0 118.4,262.9 118.4,267.1" fill="#000"/>
<rect x="122.6" y="261.0" width="16.0" height="8.0" fill="#fff" stroke="#777" stroke-width="0.8"/>
<rect x="123.0" y="265.9" width="2.8" height="2.8" fill="#f4f4f4" stroke="#777" stroke-width="0.4"/>
<polygon points="123.3,268.4 123.3,267.3 124.6,266.2 125.5,266.2 125.5,266.9 124.0,268.4" fill="#e02a2a"/>
<text x="137.0" y="265.80" font-size="4.48" text-anchor="end" fill="#333" font-weight="normal" dominant-baseline="central" textLength="6.45" lengthAdjust="spacingAndGlyphs" stroke="#333" stroke-width="0.1">Out</text>
<polyline points="138.6,265.0 147.0,265.0" fill="none" stroke="#6e6e6e" stroke-width="1"/>
<polygon points="147.0,265.0 142.8,262.9 142.8,267.1" fill="#000"/>
<rect x="147.0" y="261.0" width="6.9" height="8.0" fill="#c6d3ec" stroke="#7d8aa3" stroke-width="0.8"/>
<text x="150.4" y="265.50" font-size="3.92" text-anchor="middle" fill="#223" font-weight="normal" dominant-baseline="central" textLength="1.17" lengthAdjust="spacingAndGlyphs" stroke="#223" stroke-width="0.16">¹</text>
<polyline points="153.6,265.0 165.0,265.0" fill="none" stroke="#6e6e6e" stroke-width="1"/>
<polygon points="165.0,265.0 160.8,262.9 160.8,267.1" fill="#000"/>
<polygon points="165.0,265.0 177.0,261.0 213.4,261.0 213.4,269.0 177.0,269.0" fill="#fff" stroke="#555" stroke-width="0.8"/>
<text x="195.2" y="266.00" font-size="4.9" text-anchor="middle" fill="#333" font-weight="normal" dominant-baseline="central" textLength="15.2" lengthAdjust="spacingAndGlyphs" stroke="#333" stroke-width="0.1">clip_rst</text>
<text x="221.5" y="265.50" font-size="5.28" text-anchor="middle" fill="#333" font-weight="normal" dominant-baseline="central" textLength="5.34" lengthAdjust="spacingAndGlyphs" stroke="#333" stroke-width="0.1">16</text>
<polyline points="85.0,273.6 96.6,273.6" fill="none" stroke="#6e6e6e" stroke-width="1"/>
<polygon points="96.6,273.6 92.4,271.5 92.4,275.7" fill="#000"/>
<rect x="96.6" y="270.0" width="13.0" height="7.2" fill="#c6d3ec" stroke="#7d8aa3" stroke-width="0.8"/>
<text x="103.1" y="274.10" font-size="4.03" text-anchor="middle" fill="#223" font-weight="normal" dominant-baseline="central" textLength="7.0" lengthAdjust="spacingAndGlyphs" stroke="#223" stroke-width="0.1">[a:b]</text>
<polyline points="109.6,273.6 122.6,273.6" fill="none" stroke="#6e6e6e" stroke-width="1"/>
<polygon points="122.6,273.6 118.4,271.5 118.4,275.7" fill="#000"/>
<rect x="122.6" y="269.6" width="16.0" height="8.0" fill="#fff" stroke="#777" stroke-width="0.8"/>
<rect x="123.0" y="274.5" width="2.8" height="2.8" fill="#f4f4f4" stroke="#777" stroke-width="0.4"/>
<polygon points="123.3,277.0 123.3,275.9 124.6,274.8 125.5,274.8 125.5,275.5 124.0,277.0" fill="#e02a2a"/>
<text x="137.0" y="274.40" font-size="4.48" text-anchor="end" fill="#333" font-weight="normal" dominant-baseline="central" textLength="6.45" lengthAdjust="spacingAndGlyphs" stroke="#333" stroke-width="0.1">Out</text>
<polyline points="138.6,273.6 147.0,273.6" fill="none" stroke="#6e6e6e" stroke-width="1"/>
<polygon points="147.0,273.6 142.8,271.5 142.8,275.7" fill="#000"/>
<rect x="147.0" y="269.6" width="6.9" height="8.0" fill="#c6d3ec" stroke="#7d8aa3" stroke-width="0.8"/>
<text x="150.4" y="274.10" font-size="3.92" text-anchor="middle" fill="#223" font-weight="normal" dominant-baseline="central" textLength="1.17" lengthAdjust="spacingAndGlyphs" stroke="#223" stroke-width="0.16">¹</text>
<polyline points="153.6,273.6 165.0,273.6" fill="none" stroke="#6e6e6e" stroke-width="1"/>
<polygon points="165.0,273.6 160.8,271.5 160.8,275.7" fill="#000"/>
<polygon points="165.0,273.6 177.0,269.6 213.4,269.6 213.4,277.6 177.0,277.6" fill="#fff" stroke="#555" stroke-width="0.8"/>
<text x="195.2" y="274.60" font-size="4.9" text-anchor="middle" fill="#333" font-weight="normal" dominant-baseline="central" textLength="20.81" lengthAdjust="spacingAndGlyphs" stroke="#333" stroke-width="0.1">sync_arm</text>
<text x="221.5" y="274.10" font-size="5.28" text-anchor="middle" fill="#333" font-weight="normal" dominant-baseline="central" textLength="5.34" lengthAdjust="spacingAndGlyphs" stroke="#333" stroke-width="0.1">17</text>
<polyline points="85.0,282.6 96.6,282.6" fill="none" stroke="#6e6e6e" stroke-width="1"/>
<polygon points="96.6,282.6 92.4,280.5 92.4,284.7" fill="#000"/>
<rect x="96.6" y="279.0" width="13.0" height="7.2" fill="#c6d3ec" stroke="#7d8aa3" stroke-width="0.8"/>
<text x="103.1" y="283.10" font-size="4.03" text-anchor="middle" fill="#223" font-weight="normal" dominant-baseline="central" textLength="7.0" lengthAdjust="spacingAndGlyphs" stroke="#223" stroke-width="0.1">[a:b]</text>
<polyline points="109.6,282.6 122.6,282.6" fill="none" stroke="#6e6e6e" stroke-width="1"/>
<polygon points="122.6,282.6 118.4,280.5 118.4,284.7" fill="#000"/>
<rect x="122.6" y="278.6" width="16.0" height="8.0" fill="#fff" stroke="#777" stroke-width="0.8"/>
<rect x="123.0" y="283.5" width="2.8" height="2.8" fill="#f4f4f4" stroke="#777" stroke-width="0.4"/>
<polygon points="123.3,286.0 123.3,284.9 124.6,283.8 125.5,283.8 125.5,284.5 124.0,286.0" fill="#e02a2a"/>
<text x="137.0" y="283.40" font-size="4.48" text-anchor="end" fill="#333" font-weight="normal" dominant-baseline="central" textLength="6.45" lengthAdjust="spacingAndGlyphs" stroke="#333" stroke-width="0.1">Out</text>
<polyline points="138.6,282.6 147.0,282.6" fill="none" stroke="#6e6e6e" stroke-width="1"/>
<polygon points="147.0,282.6 142.8,280.5 142.8,284.7" fill="#000"/>
<rect x="147.0" y="278.6" width="6.9" height="8.0" fill="#c6d3ec" stroke="#7d8aa3" stroke-width="0.8"/>
<text x="150.4" y="283.10" font-size="3.92" text-anchor="middle" fill="#223" font-weight="normal" dominant-baseline="central" textLength="1.17" lengthAdjust="spacingAndGlyphs" stroke="#223" stroke-width="0.16">¹</text>
<polyline points="153.6,282.6 165.0,282.6" fill="none" stroke="#6e6e6e" stroke-width="1"/>
<polygon points="165.0,282.6 160.8,280.5 160.8,284.7" fill="#000"/>
<polygon points="165.0,282.6 177.0,278.6 213.4,278.6 213.4,286.6 177.0,286.6" fill="#fff" stroke="#555" stroke-width="0.8"/>
<text x="195.2" y="283.60" font-size="4.9" text-anchor="middle" fill="#333" font-weight="normal" dominant-baseline="central" textLength="20.28" lengthAdjust="spacingAndGlyphs" stroke="#333" stroke-width="0.1">soft_sync</text>
<text x="221.5" y="283.10" font-size="5.28" text-anchor="middle" fill="#333" font-weight="normal" dominant-baseline="central" textLength="5.34" lengthAdjust="spacingAndGlyphs" stroke="#333" stroke-width="0.1">18</text>
<text x="145.6" y="326.10" font-size="5.04" text-anchor="middle" fill="#333" font-weight="normal" dominant-baseline="central" textLength="106" lengthAdjust="spacingAndGlyphs" stroke="#333" stroke-width="0.1">adc_clock 40M  dec_fir  0,20  bw=10M (0~10MHz)</text>
<rect x="34.1" y="318.1" width="23.8" height="24.2" fill="#fff" stroke="#666" stroke-width="0.9"/>
<path d="M41,324.5 L50,324.5 L45,330 L50,336 L41,336 L45,330 Z" fill="#c3cbe6" stroke="#c3cbe6" stroke-width="1.6"/>
<path d="M34.3,324.3 L46.5,324.3 C48.5,324.3 48.6,326 48.8,330 L49.2,337.6 L57.5,337.6" fill="none" stroke="#333" stroke-width="0.9"/>
<rect x="49.6" y="337" width="8.1" height="2.6" fill="#111"/>
<rect x="50.5" y="340" width="6" height="0.8" fill="#888"/>
<text x="46.2" y="346.70" font-size="5.04" text-anchor="middle" fill="#333" font-weight="normal" dominant-baseline="central" textLength="19.42" lengthAdjust="spacingAndGlyphs" stroke="#333" stroke-width="0.1">FDATool1</text>
<rect x="228.9" y="306.3" width="22.6" height="14.3" fill="#fff" stroke="#777" stroke-width="0.8"/>
<text x="240.2" y="313.90" font-size="6.06" text-anchor="middle" fill="#333" font-weight="normal" dominant-baseline="central" textLength="16.18" lengthAdjust="spacingAndGlyphs" stroke="#333" stroke-width="0.1">100000</text>
<polyline points="251.5,313.3 259.9,313.3" fill="none" stroke="#6e6e6e" stroke-width="1"/>
<polygon points="259.9,313.3 255.7,311.2 255.7,315.4" fill="#000"/>
<rect x="259.9" y="306.6" width="44.6" height="13.5" fill="#ffff00" stroke="#666" stroke-width="0.8"/>
<rect x="260.5" y="316.9" width="2.8" height="2.8" fill="#f4f4f4" stroke="#777" stroke-width="0.4"/>
<polygon points="260.8,319.4 260.8,318.3 262.1,317.2 263.0,317.2 263.0,317.9 261.5,319.4" fill="#e02a2a"/>
<text x="261.5" y="313.80" font-size="4.14" text-anchor="start" fill="#333" font-weight="normal" dominant-baseline="central" textLength="10.69" lengthAdjust="spacingAndGlyphs" stroke="#333" stroke-width="0.1">sim_in</text>
<text x="303.0" y="313.80" font-size="4.14" text-anchor="end" fill="#333" font-weight="normal" dominant-baseline="central" textLength="10.29" lengthAdjust="spacingAndGlyphs" stroke="#333" stroke-width="0.1">reg_in</text>
<text x="282.2" y="325.10" font-size="5.04" text-anchor="middle" fill="#333" font-weight="normal" dominant-baseline="central" textLength="15.51" lengthAdjust="spacingAndGlyphs" stroke="#333" stroke-width="0.1">val_pps</text>
<polyline points="304.5,313.3 346.2,313.3 346.2,286.9 352.3,286.9" fill="none" stroke="#6e6e6e" stroke-width="1"/>
<polygon points="352.3,286.9 348.1,284.8 348.1,289.0" fill="#000"/>
<polygon points="312.5,258.5 337.4,258.5 344.7,262.3 337.4,266.1 312.5,266.1" fill="#fff" stroke="#555" stroke-width="0.8"/>
<text x="325.0" y="263.30" font-size="4.9" text-anchor="middle" fill="#333" font-weight="normal" dominant-baseline="central" textLength="20.81" lengthAdjust="spacingAndGlyphs" stroke="#333" stroke-width="0.1">sync_arm</text>
<polyline points="344.7,262.3 346.6,262.3 346.6,260.8 352.3,260.8" fill="none" stroke="#6e6e6e" stroke-width="1"/>
<polygon points="352.3,260.8 348.1,258.7 348.1,262.9" fill="#000"/>
<polygon points="293.3,274.0 317.3,274.0 323.9,277.8 317.3,281.6 293.3,281.6" fill="#fff" stroke="#555" stroke-width="0.8"/>
<text x="305.3" y="278.80" font-size="4.9" text-anchor="middle" fill="#333" font-weight="normal" dominant-baseline="central" textLength="20.28" lengthAdjust="spacingAndGlyphs" stroke="#333" stroke-width="0.1">soft_sync</text>
<polygon points="293.3,282.7 317.3,282.7 323.9,286.6 317.3,290.5 293.3,290.5" fill="#fff" stroke="#555" stroke-width="0.8"/>
<text x="305.3" y="287.60" font-size="4.9" text-anchor="middle" fill="#333" font-weight="normal" dominant-baseline="central" textLength="22.95" lengthAdjust="spacingAndGlyphs" stroke="#333" stroke-width="0.1">adc0_sync</text>
<polyline points="323.9,277.8 332.8,277.8" fill="none" stroke="#6e6e6e" stroke-width="1"/>
<polygon points="332.8,277.8 328.6,275.7 328.6,279.9" fill="#000"/>
<polyline points="323.9,286.6 332.8,286.6" fill="none" stroke="#6e6e6e" stroke-width="1"/>
<polygon points="332.8,286.6 328.6,284.5 328.6,288.7" fill="#000"/>
<rect x="332.8" y="273.1" width="10.9" height="17.9" fill="#c6d3ec" stroke="#7d8aa3" stroke-width="0.8"/>
<text x="338.2" y="282.55" font-size="3.92" text-anchor="middle" fill="#223" font-weight="normal" dominant-baseline="central" textLength="3.11" lengthAdjust="spacingAndGlyphs" stroke="#223" stroke-width="0.16">or</text>
<polyline points="343.7,282.0 346.3,282.0 346.3,273.9 352.3,273.9" fill="none" stroke="#6e6e6e" stroke-width="1"/>
<polygon points="352.3,273.9 348.1,271.8 348.1,276.0" fill="#000"/>
<rect x="352.3" y="253.1" width="45.5" height="40.3" fill="#fff" stroke="#777" stroke-width="0.8"/>
<text x="353.5" y="261.30" font-size="4.37" text-anchor="start" fill="#222" font-weight="normal" dominant-baseline="central" textLength="6.72" lengthAdjust="spacingAndGlyphs" stroke="#222" stroke-width="0.1">arm</text>
<text x="353.5" y="274.40" font-size="4.37" text-anchor="start" fill="#222" font-weight="normal" dominant-baseline="central" textLength="6.29" lengthAdjust="spacingAndGlyphs" stroke="#222" stroke-width="0.1">pps</text>
<text x="353.5" y="287.40" font-size="4.37" text-anchor="start" fill="#222" font-weight="normal" dominant-baseline="central" textLength="21.03" lengthAdjust="spacingAndGlyphs" stroke="#222" stroke-width="0.1">sync_period</text>
<text x="396.6" y="265.80" font-size="4.37" text-anchor="end" fill="#222" font-weight="normal" dominant-baseline="central" textLength="7.58" lengthAdjust="spacingAndGlyphs" stroke="#222" stroke-width="0.1">mrst</text>
<text x="396.6" y="285.10" font-size="4.37" text-anchor="end" fill="#222" font-weight="normal" dominant-baseline="central" textLength="8.02" lengthAdjust="spacingAndGlyphs" stroke="#222" stroke-width="0.1">sync</text>
<text x="375.0" y="297.70" font-size="5.04" text-anchor="middle" fill="#333" font-weight="normal" dominant-baseline="central" textLength="19.26" lengthAdjust="spacingAndGlyphs" stroke="#333" stroke-width="0.1">sync_gen</text>
<polyline points="397.8,265.3 400.5,265.3 400.5,262.3 406.3,262.3" fill="none" stroke="#6e6e6e" stroke-width="1"/>
<polygon points="406.3,262.3 402.1,260.2 402.1,264.4" fill="#000"/>
<polygon points="406.3,262.3 409.3,258.9 427.6,258.9 427.6,265.7 409.3,265.7" fill="#fff" stroke="#555" stroke-width="0.8"/>
<text x="418.5" y="263.30" font-size="4.9" text-anchor="middle" fill="#333" font-weight="normal" dominant-baseline="central" textLength="9.33" lengthAdjust="spacingAndGlyphs" stroke="#333" stroke-width="0.1">mrst</text>
<polyline points="397.8,284.6 428.0,284.6" fill="none" stroke="#6e6e6e" stroke-width="1"/>
<polygon points="428.0,284.6 423.8,282.5 423.8,286.7" fill="#000"/>
<polygon points="428.0,284.6 434.7,280.6 458.8,280.6 458.8,288.5 434.7,288.5" fill="#fff" stroke="#555" stroke-width="0.8"/>
<text x="446.7" y="285.55" font-size="4.9" text-anchor="middle" fill="#333" font-weight="normal" dominant-baseline="central" textLength="25.34" lengthAdjust="spacingAndGlyphs" stroke="#333" stroke-width="0.1">timing_sync</text>
<polyline points="412.3,284.6 412.3,352.8" fill="none" stroke="#6e6e6e" stroke-width="1"/>
<circle cx="412.3" cy="284.6" r="0.9" fill="#333"/>
<polyline points="412.3,352.8 439.0,352.8" fill="none" stroke="#6e6e6e" stroke-width="1"/>
<polygon points="439.0,352.8 434.8,350.7 434.8,354.9" fill="#000"/>
<rect x="439.0" y="347.0" width="10.8" height="11.6" fill="#c6d3ec" stroke="#7d8aa3" stroke-width="0.8"/>
<text x="444.4" y="353.30" font-size="3.36" text-anchor="middle" fill="#223" font-weight="normal" dominant-baseline="central" textLength="4.17" lengthAdjust="spacingAndGlyphs" stroke="#223" stroke-width="0.16">not</text>
<polyline points="449.8,352.8 458.6,352.8" fill="none" stroke="#6e6e6e" stroke-width="1"/>
<polygon points="458.6,352.8 454.4,350.7 454.4,354.9" fill="#000"/>
<rect x="458.6" y="346.5" width="45.0" height="13.5" fill="#ffff00" stroke="#666" stroke-width="0.8"/>
<rect x="459.2" y="356.8" width="2.8" height="2.8" fill="#f4f4f4" stroke="#777" stroke-width="0.4"/>
<polygon points="459.5,359.3 459.5,358.2 460.8,357.1 461.7,357.1 461.7,357.8 460.2,359.3" fill="#e02a2a"/>
<text x="460.0" y="353.70" font-size="4.14" text-anchor="start" fill="#333" font-weight="normal" dominant-baseline="central" textLength="14.2" lengthAdjust="spacingAndGlyphs" stroke="#333" stroke-width="0.1">gpio_out</text>
<text x="502.0" y="353.70" font-size="4.14" text-anchor="end" fill="#333" font-weight="normal" dominant-baseline="central" textLength="12.96" lengthAdjust="spacingAndGlyphs" stroke="#333" stroke-width="0.1">sim_out</text>
<text x="481.0" y="365.10" font-size="5.04" text-anchor="middle" fill="#333" font-weight="normal" dominant-baseline="central" textLength="13.26" lengthAdjust="spacingAndGlyphs" stroke="#333" stroke-width="0.1">gpios1</text>
<polyline points="503.6,353.2 518.3,353.2" fill="none" stroke="#6e6e6e" stroke-width="1"/>
<polygon points="518.3,353.2 514.1,351.1 514.1,355.3" fill="#000"/>
<rect x="518.3" y="348.8" width="9.5" height="9.2" fill="#fff" stroke="#666" stroke-width="0.7"/>
<polyline points="520.7,351.6 524.9,351.6 524.9,355.2 520.7,355.2" fill="none" stroke="#555" stroke-width="0.6"/>
<polyline points="521.6,353.4 524.9,353.4" fill="none" stroke="#555" stroke-width="0.6"/>
<polyline points="452.3,352.8 452.3,386.2 518.6,386.2" fill="none" stroke="#6e6e6e" stroke-width="1"/>
<polygon points="518.6,386.2 514.4,384.1 514.4,388.3" fill="#000"/>
<circle cx="452.3" cy="352.8" r="0.9" fill="#333"/>
<rect x="518.6" y="379.4" width="44.6" height="13.4" fill="#ffff00" stroke="#666" stroke-width="0.8"/>
<rect x="519.2" y="389.6" width="2.8" height="2.8" fill="#f4f4f4" stroke="#777" stroke-width="0.4"/>
<polygon points="519.5,392.1 519.5,391.0 520.8,389.9 521.7,389.9 521.7,390.6 520.2,392.1" fill="#e02a2a"/>
<text x="520.0" y="386.70" font-size="4.14" text-anchor="start" fill="#333" font-weight="normal" dominant-baseline="central" textLength="14.2" lengthAdjust="spacingAndGlyphs" stroke="#333" stroke-width="0.1">gpio_out</text>
<text x="562.0" y="386.70" font-size="4.14" text-anchor="end" fill="#333" font-weight="normal" dominant-baseline="central" textLength="12.96" lengthAdjust="spacingAndGlyphs" stroke="#333" stroke-width="0.1">sim_out</text>
<text x="541.0" y="398.00" font-size="5.04" text-anchor="middle" fill="#333" font-weight="normal" dominant-baseline="central" textLength="13.26" lengthAdjust="spacingAndGlyphs" stroke="#333" stroke-width="0.1">gpios2</text>
<polyline points="563.2,386.2 578.0,386.2" fill="none" stroke="#6e6e6e" stroke-width="1"/>
<polygon points="578.0,386.2 573.8,384.1 573.8,388.3" fill="#000"/>
<rect x="578.0" y="381.5" width="9.4" height="9.5" fill="#fff" stroke="#666" stroke-width="0.7"/>
<polyline points="580.4,384.4 584.6,384.4 584.6,388.1 580.4,388.1" fill="none" stroke="#555" stroke-width="0.6"/>
<polyline points="581.3,386.2 584.6,386.2" fill="none" stroke="#555" stroke-width="0.6"/>
<polygon points="516.5,245.5 539.9,245.5 546.0,249.3 539.9,253.1 516.5,253.1" fill="#fff" stroke="#555" stroke-width="0.8"/>
<text x="528.2" y="250.30" font-size="4.9" text-anchor="middle" fill="#333" font-weight="normal" dominant-baseline="central" textLength="9.33" lengthAdjust="spacingAndGlyphs" stroke="#333" stroke-width="0.1">mrst</text>
<polygon points="516.5,254.2 539.9,254.2 546.0,258.0 539.9,261.8 516.5,261.8" fill="#fff" stroke="#555" stroke-width="0.8"/>
<text x="528.2" y="259.00" font-size="4.9" text-anchor="middle" fill="#333" font-weight="normal" dominant-baseline="central" textLength="25.34" lengthAdjust="spacingAndGlyphs" stroke="#333" stroke-width="0.1">timing_sync</text>
<polyline points="546.0,249.2 558.0,249.2" fill="none" stroke="#6e6e6e" stroke-width="1"/>
<polygon points="558.0,249.2 553.8,247.1 553.8,251.3" fill="#000"/>
<polyline points="546.0,258.0 558.0,258.0" fill="none" stroke="#6e6e6e" stroke-width="1"/>
<polygon points="558.0,258.0 553.8,255.9 553.8,260.1" fill="#000"/>
<rect x="558.0" y="244.0" width="22.7" height="19.4" fill="#12908f" stroke="#2a4a55" stroke-width="0.8"/>
<text x="559.2" y="249.70" font-size="4.37" text-anchor="start" fill="#022" font-weight="normal" dominant-baseline="central" textLength="7.58" lengthAdjust="spacingAndGlyphs" stroke="#022" stroke-width="0.1">mrst</text>
<text x="559.2" y="258.50" font-size="4.37" text-anchor="start" fill="#022" font-weight="normal" dominant-baseline="central" textLength="8.02" lengthAdjust="spacingAndGlyphs" stroke="#022" stroke-width="0.1">sync</text>
<text x="579.5" y="254.50" font-size="4.37" text-anchor="end" fill="#022" font-weight="normal" dominant-baseline="central" textLength="7.37" lengthAdjust="spacingAndGlyphs" stroke="#022" stroke-width="0.1">time</text>
<text x="569.0" y="268.00" font-size="5.04" text-anchor="middle" fill="#333" font-weight="normal" dominant-baseline="central" textLength="27.52" lengthAdjust="spacingAndGlyphs" stroke="#333" stroke-width="0.1">cd_local_time</text>
<polyline points="580.7,254.0 589.5,254.0" fill="none" stroke="#6e6e6e" stroke-width="1"/>
<polygon points="589.5,254.0 585.3,251.9 585.3,256.1" fill="#000"/>
<polygon points="589.5,253.4 601.5,249.1 637.4,249.1 637.4,257.8 601.5,257.8" fill="#fff" stroke="#555" stroke-width="0.8"/>
<text x="619.5" y="254.45" font-size="4.9" text-anchor="middle" fill="#333" font-weight="normal" dominant-baseline="central" textLength="29.35" lengthAdjust="spacingAndGlyphs" stroke="#333" stroke-width="0.1">cd_local_time</text>
<rect x="646.4" y="249.2" width="30.4" height="11.4" fill="#000"/>
<rect x="644.4" y="247.2" width="30.4" height="11.4" fill="#fff" stroke="#000" stroke-width="0.7"/>
<text x="646.3" y="250.80" font-size="5.15" text-anchor="start" fill="#000" font-weight="normal" dominant-baseline="central" textLength="25.7" lengthAdjust="spacingAndGlyphs" stroke="#000" stroke-width="0.06">Current time</text>
<text x="645.4" y="255.80" font-size="5.15" text-anchor="start" fill="#000" font-weight="normal" dominant-baseline="central" textLength="28.5" lengthAdjust="spacingAndGlyphs" stroke="#000" stroke-width="0.06">in data stream</text>
<polygon points="512.0,276.2 540.4,276.2 550.6,280.2 540.4,284.2 512.0,284.2" fill="#fff" stroke="#555" stroke-width="0.8"/>
<text x="526.2" y="281.20" font-size="4.9" text-anchor="middle" fill="#333" font-weight="normal" dominant-baseline="central" textLength="24.28" lengthAdjust="spacingAndGlyphs" stroke="#333" stroke-width="0.1">cd_tr_arm0</text>
<polygon points="512.0,289.4 540.4,289.4 550.6,293.4 540.4,297.4 512.0,297.4" fill="#fff" stroke="#555" stroke-width="0.8"/>
<text x="526.2" y="294.40" font-size="4.9" text-anchor="middle" fill="#333" font-weight="normal" dominant-baseline="central" textLength="29.35" lengthAdjust="spacingAndGlyphs" stroke="#333" stroke-width="0.1">cd_local_time</text>
<polyline points="550.6,280.4 558.0,280.4" fill="none" stroke="#6e6e6e" stroke-width="1"/>
<polygon points="558.0,280.4 553.8,278.3 553.8,282.5" fill="#000"/>
<polyline points="550.6,293.2 558.0,293.2" fill="none" stroke="#6e6e6e" stroke-width="1"/>
<polygon points="558.0,293.2 553.8,291.1 553.8,295.3" fill="#000"/>
<rect x="558.0" y="272.5" width="43.0" height="28.3" fill="#12908f" stroke="#2a4a55" stroke-width="0.8"/>
<text x="559.2" y="280.90" font-size="4.37" text-anchor="start" fill="#022" font-weight="normal" dominant-baseline="central" textLength="6.72" lengthAdjust="spacingAndGlyphs" stroke="#022" stroke-width="0.1">arm</text>
<text x="559.2" y="293.70" font-size="4.37" text-anchor="start" fill="#022" font-weight="normal" dominant-baseline="central" textLength="21.68" lengthAdjust="spacingAndGlyphs" stroke="#022" stroke-width="0.1">current_time</text>
<text x="599.8" y="278.50" font-size="4.37" text-anchor="end" fill="#022" font-weight="normal" dominant-baseline="central" textLength="17.56" lengthAdjust="spacingAndGlyphs" stroke="#022" stroke-width="0.1">cmd_valid</text>
<text x="599.8" y="287.40" font-size="4.37" text-anchor="end" fill="#022" font-weight="normal" dominant-baseline="central" textLength="11.71" lengthAdjust="spacingAndGlyphs" stroke="#022" stroke-width="0.1">enable</text>
<text x="599.8" y="296.20" font-size="4.37" text-anchor="end" fill="#022" font-weight="normal" dominant-baseline="central" textLength="11.05" lengthAdjust="spacingAndGlyphs" stroke="#022" stroke-width="0.1">armed</text>
<text x="579.5" y="305.50" font-size="5.04" text-anchor="middle" fill="#333" font-weight="normal" dominant-baseline="central" textLength="12.51" lengthAdjust="spacingAndGlyphs" stroke="#333" stroke-width="0.1">cd_tr0</text>
<polyline points="601.0,278.0 612.0,278.0" fill="none" stroke="#6e6e6e" stroke-width="1"/>
<polygon points="612.0,278.0 607.8,275.9 607.8,280.1" fill="#000"/>
<polygon points="612.0,277.8 624.0,273.4 655.0,273.4 655.0,282.2 624.0,282.2" fill="#fff" stroke="#555" stroke-width="0.8"/>
<text x="639.5" y="278.80" font-size="4.9" text-anchor="middle" fill="#333" font-weight="normal" dominant-baseline="central" textLength="16.54" lengthAdjust="spacingAndGlyphs" stroke="#333" stroke-width="0.1">cd_val0</text>
<polyline points="601.0,286.9 612.0,286.9" fill="none" stroke="#6e6e6e" stroke-width="1"/>
<polygon points="612.0,286.9 607.8,284.8 607.8,289.0" fill="#000"/>
<polygon points="612.0,286.6 624.0,282.5 655.0,282.5 655.0,290.6 624.0,290.6" fill="#fff" stroke="#555" stroke-width="0.8"/>
<text x="639.5" y="287.55" font-size="4.9" text-anchor="middle" fill="#333" font-weight="normal" dominant-baseline="central" textLength="21.35" lengthAdjust="spacingAndGlyphs" stroke="#333" stroke-width="0.1">cd_tr_en0</text>
<polyline points="601.0,295.7 612.0,295.7" fill="none" stroke="#6e6e6e" stroke-width="1"/>
<polygon points="612.0,295.7 607.8,293.6 607.8,297.8" fill="#000"/>
<polygon points="612.0,295.6 624.0,291.3 655.0,291.3 655.0,300.0 624.0,300.0" fill="#fff" stroke="#555" stroke-width="0.8"/>
<text x="639.5" y="296.65" font-size="4.9" text-anchor="middle" fill="#333" font-weight="normal" dominant-baseline="central" textLength="29.62" lengthAdjust="spacingAndGlyphs" stroke="#333" stroke-width="0.1">cd_tr_armed0</text>
<polygon points="512.0,314.1 540.4,314.1 550.6,318.1 540.4,322.1 512.0,322.1" fill="#fff" stroke="#555" stroke-width="0.8"/>
<text x="526.2" y="319.10" font-size="4.9" text-anchor="middle" fill="#333" font-weight="normal" dominant-baseline="central" textLength="24.28" lengthAdjust="spacingAndGlyphs" stroke="#333" stroke-width="0.1">cd_tr_arm1</text>
<polygon points="512.0,327.3 540.4,327.3 550.6,331.3 540.4,335.3 512.0,335.3" fill="#fff" stroke="#555" stroke-width="0.8"/>
<text x="526.2" y="332.30" font-size="4.9" text-anchor="middle" fill="#333" font-weight="normal" dominant-baseline="central" textLength="29.35" lengthAdjust="spacingAndGlyphs" stroke="#333" stroke-width="0.1">cd_local_time</text>
<polyline points="550.6,318.3 558.0,318.3" fill="none" stroke="#6e6e6e" stroke-width="1"/>
<polygon points="558.0,318.3 553.8,316.2 553.8,320.4" fill="#000"/>
<polyline points="550.6,331.1 558.0,331.1" fill="none" stroke="#6e6e6e" stroke-width="1"/>
<polygon points="558.0,331.1 553.8,329.0 553.8,333.2" fill="#000"/>
<rect x="558.0" y="310.4" width="43.0" height="28.3" fill="#12908f" stroke="#2a4a55" stroke-width="0.8"/>
<text x="559.2" y="318.80" font-size="4.37" text-anchor="start" fill="#022" font-weight="normal" dominant-baseline="central" textLength="6.72" lengthAdjust="spacingAndGlyphs" stroke="#022" stroke-width="0.1">arm</text>
<text x="559.2" y="331.60" font-size="4.37" text-anchor="start" fill="#022" font-weight="normal" dominant-baseline="central" textLength="21.68" lengthAdjust="spacingAndGlyphs" stroke="#022" stroke-width="0.1">current_time</text>
<text x="599.8" y="316.40" font-size="4.37" text-anchor="end" fill="#022" font-weight="normal" dominant-baseline="central" textLength="17.56" lengthAdjust="spacingAndGlyphs" stroke="#022" stroke-width="0.1">cmd_valid</text>
<text x="599.8" y="325.30" font-size="4.37" text-anchor="end" fill="#022" font-weight="normal" dominant-baseline="central" textLength="11.71" lengthAdjust="spacingAndGlyphs" stroke="#022" stroke-width="0.1">enable</text>
<text x="599.8" y="334.10" font-size="4.37" text-anchor="end" fill="#022" font-weight="normal" dominant-baseline="central" textLength="11.05" lengthAdjust="spacingAndGlyphs" stroke="#022" stroke-width="0.1">armed</text>
<text x="579.5" y="343.40" font-size="5.04" text-anchor="middle" fill="#333" font-weight="normal" dominant-baseline="central" textLength="12.51" lengthAdjust="spacingAndGlyphs" stroke="#333" stroke-width="0.1">cd_tr1</text>
<polyline points="601.0,315.9 612.0,315.9" fill="none" stroke="#6e6e6e" stroke-width="1"/>
<polygon points="612.0,315.9 607.8,313.8 607.8,318.0" fill="#000"/>
<polygon points="612.0,315.7 624.0,311.3 655.0,311.3 655.0,320.1 624.0,320.1" fill="#fff" stroke="#555" stroke-width="0.8"/>
<text x="639.5" y="316.70" font-size="4.9" text-anchor="middle" fill="#333" font-weight="normal" dominant-baseline="central" textLength="16.54" lengthAdjust="spacingAndGlyphs" stroke="#333" stroke-width="0.1">cd_val1</text>
<polyline points="601.0,324.8 612.0,324.8" fill="none" stroke="#6e6e6e" stroke-width="1"/>
<polygon points="612.0,324.8 607.8,322.7 607.8,326.9" fill="#000"/>
<polygon points="612.0,324.4 624.0,320.4 655.0,320.4 655.0,328.5 624.0,328.5" fill="#fff" stroke="#555" stroke-width="0.8"/>
<text x="639.5" y="325.45" font-size="4.9" text-anchor="middle" fill="#333" font-weight="normal" dominant-baseline="central" textLength="21.35" lengthAdjust="spacingAndGlyphs" stroke="#333" stroke-width="0.1">cd_tr_en1</text>
<polyline points="601.0,333.6 612.0,333.6" fill="none" stroke="#6e6e6e" stroke-width="1"/>
<polygon points="612.0,333.6 607.8,331.5 607.8,335.7" fill="#000"/>
<polygon points="612.0,333.5 624.0,329.2 655.0,329.2 655.0,337.9 624.0,337.9" fill="#fff" stroke="#555" stroke-width="0.8"/>
<text x="639.5" y="334.55" font-size="4.9" text-anchor="middle" fill="#333" font-weight="normal" dominant-baseline="central" textLength="29.62" lengthAdjust="spacingAndGlyphs" stroke="#333" stroke-width="0.1">cd_tr_armed1</text>
<rect x="732.6" y="259.5" width="18.9" height="98.6" fill="#fff" stroke="#777" stroke-width="0.8"/>
<rect x="735.6" y="274.0" width="12.7" height="35.3" fill="#fff" stroke="#777" stroke-width="0.7"/>
<polygon points="688.8,265.6 717.6,265.6 728.0,268.9 717.6,272.2 688.8,272.2" fill="#fff" stroke="#555" stroke-width="0.8"/>
<text x="703.2" y="269.90" font-size="4.39" text-anchor="middle" fill="#333" font-weight="normal" dominant-baseline="central" textLength="23.19" lengthAdjust="spacingAndGlyphs" stroke="#333" stroke-width="0.1">[scope_adc]</text>
<polyline points="728.0,268.9 732.6,268.9" fill="none" stroke="#6e6e6e" stroke-width="1"/>
<polygon points="732.6,268.9 728.4,266.8 728.4,271.0" fill="#000"/>
<polyline points="731.4,280.1 733.2,281.5 731.4,282.9" fill="none" stroke="#555" stroke-width="0.6"/>
<polyline points="731.4,294.0 733.2,295.4 731.4,296.8" fill="none" stroke="#555" stroke-width="0.6"/>
<polygon points="688.8,305.3 717.6,305.3 728.0,308.6 717.6,311.9 688.8,311.9" fill="#fff" stroke="#555" stroke-width="0.8"/>
<text x="703.2" y="309.60" font-size="4.39" text-anchor="middle" fill="#333" font-weight="normal" dominant-baseline="central" textLength="19.84" lengthAdjust="spacingAndGlyphs" stroke="#333" stroke-width="0.1">[scope_fir]</text>
<polyline points="728.0,308.6 732.6,308.6" fill="none" stroke="#6e6e6e" stroke-width="1"/>
<polygon points="732.6,308.6 728.4,306.5 728.4,310.7" fill="#000"/>
<polygon points="688.8,318.7 717.6,318.7 728.0,322.0 717.6,325.3 688.8,325.3" fill="#fff" stroke="#555" stroke-width="0.8"/>
<text x="703.2" y="323.00" font-size="4.39" text-anchor="middle" fill="#333" font-weight="normal" dominant-baseline="central" textLength="22.23" lengthAdjust="spacingAndGlyphs" stroke="#333" stroke-width="0.1">[scope_pfb]</text>
<polyline points="728.0,322.0 732.6,322.0" fill="none" stroke="#6e6e6e" stroke-width="1"/>
<polygon points="732.6,322.0 728.4,319.9 728.4,324.1" fill="#000"/>
<polygon points="688.8,332.1 717.6,332.1 728.0,335.4 717.6,338.7 688.8,338.7" fill="#fff" stroke="#555" stroke-width="0.8"/>
<text x="703.2" y="336.40" font-size="4.39" text-anchor="middle" fill="#333" font-weight="normal" dominant-baseline="central" textLength="19.76" lengthAdjust="spacingAndGlyphs" stroke="#333" stroke-width="0.1">[scope_fft]</text>
<polyline points="728.0,335.4 732.6,335.4" fill="none" stroke="#6e6e6e" stroke-width="1"/>
<polygon points="732.6,335.4 728.4,333.3 728.4,337.5" fill="#000"/>
<polygon points="688.8,345.2 717.6,345.2 728.0,348.5 717.6,351.8 688.8,351.8" fill="#fff" stroke="#555" stroke-width="0.8"/>
<text x="703.2" y="349.50" font-size="4.39" text-anchor="middle" fill="#333" font-weight="normal" dominant-baseline="central" textLength="29.41" lengthAdjust="spacingAndGlyphs" stroke="#333" stroke-width="0.1">[scope_quant0]</text>
<polyline points="728.0,348.5 732.6,348.5" fill="none" stroke="#6e6e6e" stroke-width="1"/>
<polygon points="732.6,348.5 728.4,346.4 728.4,350.6" fill="#000"/>
<text x="742.0" y="362.90" font-size="5.04" text-anchor="middle" fill="#333" font-weight="normal" dominant-baseline="central" textLength="19.77" lengthAdjust="spacingAndGlyphs" stroke="#333" stroke-width="0.1">Scope_all</text>
<polygon points="109.0,365.0 137.4,365.0 147.5,368.5 137.4,372.0 109.0,372.0" fill="#fff" stroke="#555" stroke-width="0.8"/>
<text x="123.2" y="369.50" font-size="4.9" text-anchor="middle" fill="#333" font-weight="normal" dominant-baseline="central" textLength="9.33" lengthAdjust="spacingAndGlyphs" stroke="#333" stroke-width="0.1">mrst</text>
<polygon points="109.0,378.0 137.4,378.0 147.5,381.7 137.4,385.4 109.0,385.4" fill="#fff" stroke="#555" stroke-width="0.8"/>
<text x="123.2" y="382.70" font-size="4.9" text-anchor="middle" fill="#333" font-weight="normal" dominant-baseline="central" textLength="19.48" lengthAdjust="spacingAndGlyphs" stroke="#333" stroke-width="0.1">sync_rnd</text>
<polyline points="147.5,368.6 158.4,368.6" fill="none" stroke="#6e6e6e" stroke-width="1"/>
<polygon points="158.4,368.6 154.2,366.5 154.2,370.7" fill="#000"/>
<polyline points="147.5,381.7 158.4,381.7" fill="none" stroke="#6e6e6e" stroke-width="1"/>
<polygon points="158.4,381.7 154.2,379.6 154.2,383.8" fill="#000"/>
<rect x="69.0" y="388.5" width="22.6" height="14.0" fill="#fff" stroke="#777" stroke-width="0.8"/>
<text x="80.3" y="396.10" font-size="6.06" text-anchor="middle" fill="#333" font-weight="normal" dominant-baseline="central" textLength="16.18" lengthAdjust="spacingAndGlyphs" stroke="#333" stroke-width="0.1">100000</text>
<polyline points="91.6,395.6 100.3,395.6" fill="none" stroke="#6e6e6e" stroke-width="1"/>
<polygon points="100.3,395.6 96.1,393.5 96.1,397.7" fill="#000"/>
<rect x="100.3" y="389.0" width="44.4" height="13.5" fill="#ffff00" stroke="#666" stroke-width="0.8"/>
<rect x="100.9" y="399.3" width="2.8" height="2.8" fill="#f4f4f4" stroke="#777" stroke-width="0.4"/>
<polygon points="101.2,401.8 101.2,400.7 102.5,399.6 103.4,399.6 103.4,400.3 101.9,401.8" fill="#e02a2a"/>
<text x="102.0" y="396.10" font-size="4.14" text-anchor="start" fill="#333" font-weight="normal" dominant-baseline="central" textLength="10.69" lengthAdjust="spacingAndGlyphs" stroke="#333" stroke-width="0.1">sim_in</text>
<text x="143.0" y="396.10" font-size="4.14" text-anchor="end" fill="#333" font-weight="normal" dominant-baseline="central" textLength="10.29" lengthAdjust="spacingAndGlyphs" stroke="#333" stroke-width="0.1">reg_in</text>
<text x="122.0" y="406.30" font-size="5.04" text-anchor="middle" fill="#333" font-weight="normal" dominant-baseline="central" textLength="15.51" lengthAdjust="spacingAndGlyphs" stroke="#333" stroke-width="0.1">acc_len</text>
<polyline points="144.7,395.6 158.4,395.6" fill="none" stroke="#6e6e6e" stroke-width="1"/>
<polygon points="158.4,395.6 154.2,393.5 154.2,397.7" fill="#000"/>
<rect x="158.4" y="361.0" width="28.9" height="41.5" fill="#fff" stroke="#777" stroke-width="0.8"/>
<text x="159.6" y="369.10" font-size="4.37" text-anchor="start" fill="#222" font-weight="normal" dominant-baseline="central" textLength="7.58" lengthAdjust="spacingAndGlyphs" stroke="#222" stroke-width="0.1">mrst</text>
<text x="159.6" y="382.20" font-size="4.37" text-anchor="start" fill="#222" font-weight="normal" dominant-baseline="central" textLength="8.02" lengthAdjust="spacingAndGlyphs" stroke="#222" stroke-width="0.1">sync</text>
<text x="159.6" y="396.10" font-size="4.37" text-anchor="start" fill="#222" font-weight="normal" dominant-baseline="central" textLength="13.44" lengthAdjust="spacingAndGlyphs" stroke="#222" stroke-width="0.1">acc_len</text>
<text x="186.1" y="382.50" font-size="4.37" text-anchor="end" fill="#222" font-weight="normal" dominant-baseline="central" textLength="15.39" lengthAdjust="spacingAndGlyphs" stroke="#222" stroke-width="0.1">new_acc</text>
<text x="172.8" y="407.70" font-size="5.04" text-anchor="middle" fill="#333" font-weight="normal" dominant-baseline="central" textLength="30.27" lengthAdjust="spacingAndGlyphs" stroke="#333" stroke-width="0.1">acc_cntrl_even</text>
<text x="125.8" y="416.30" font-size="5.04" text-anchor="middle" fill="#333" font-weight="normal" dominant-baseline="central" textLength="49.03" lengthAdjust="spacingAndGlyphs" stroke="#333" stroke-width="0.1">acc_len is the number of</text>
<text x="125.8" y="421.10" font-size="5.04" text-anchor="middle" fill="#333" font-weight="normal" dominant-baseline="central" textLength="45.27" lengthAdjust="spacingAndGlyphs" stroke="#333" stroke-width="0.1">spectra to accumulate.</text>
<polyline points="187.3,382.0 249.0,382.0" fill="none" stroke="#6e6e6e" stroke-width="1"/>
<polygon points="249.0,382.0 244.8,379.9 244.8,384.1" fill="#000"/>
<rect x="249.0" y="377.6" width="8.9" height="8.8" fill="#c6d3ec" stroke="#7d8aa3" stroke-width="0.8"/>
<text x="253.4" y="382.50" font-size="3.36" text-anchor="middle" fill="#223" font-weight="normal" dominant-baseline="central" textLength="4.75" lengthAdjust="spacingAndGlyphs" stroke="#223" stroke-width="0.16">z⁻¹</text>
<polyline points="257.9,382.0 281.1,382.0 281.1,386.4" fill="none" stroke="#6e6e6e" stroke-width="1"/>
<polyline points="281.1,386.4 286.0,386.4" fill="none" stroke="#6e6e6e" stroke-width="1"/>
<polygon points="286.0,386.4 281.8,384.3 281.8,388.5" fill="#000"/>
<polyline points="264.2,382.0 264.2,355.3" fill="none" stroke="#6e6e6e" stroke-width="1"/>
<polyline points="264.2,355.3 271.0,355.3" fill="none" stroke="#6e6e6e" stroke-width="1"/>
<polygon points="271.0,355.3 266.8,353.2 266.8,357.4" fill="#000"/>
<polyline points="264.2,368.2 271.0,368.2" fill="none" stroke="#6e6e6e" stroke-width="1"/>
<polygon points="271.0,368.2 266.8,366.1 266.8,370.3" fill="#000"/>
<circle cx="264.2" cy="368.2" r="0.9" fill="#333"/>
<circle cx="264.2" cy="382.0" r="0.9" fill="#333"/>
<rect x="271.0" y="351.5" width="8.4" height="7.5" fill="#c6d3ec" stroke="#7d8aa3" stroke-width="0.8"/>
<text x="275.2" y="355.75" font-size="3.36" text-anchor="middle" fill="#223" font-weight="normal" dominant-baseline="central" textLength="4.75" lengthAdjust="spacingAndGlyphs" stroke="#223" stroke-width="0.16">z⁻²</text>
<rect x="271.0" y="364.0" width="8.4" height="8.5" fill="#c6d3ec" stroke="#7d8aa3" stroke-width="0.8"/>
<text x="275.2" y="368.75" font-size="3.36" text-anchor="middle" fill="#223" font-weight="normal" dominant-baseline="central" textLength="4.75" lengthAdjust="spacingAndGlyphs" stroke="#223" stroke-width="0.16">z⁻¹</text>
<polyline points="279.4,355.6 297.0,355.6" fill="none" stroke="#6e6e6e" stroke-width="1"/>
<polygon points="297.0,355.6 292.8,353.5 292.8,357.7" fill="#000"/>
<polygon points="264.2,342.7 283.2,342.7 286.2,346.1 283.2,349.5 264.2,349.5" fill="#fff" stroke="#555" stroke-width="0.8"/>
<text x="273.7" y="347.10" font-size="4.9" text-anchor="middle" fill="#333" font-weight="normal" dominant-baseline="central" textLength="9.33" lengthAdjust="spacingAndGlyphs" stroke="#333" stroke-width="0.1">mrst</text>
<polyline points="286.2,346.3 297.0,346.3" fill="none" stroke="#6e6e6e" stroke-width="1"/>
<polygon points="297.0,346.3 292.8,344.2 292.8,348.4" fill="#000"/>
<rect x="297.0" y="342.2" width="17.8" height="16.4" fill="#c6d3ec" stroke="#7d8aa3" stroke-width="0.8"/>
<text x="305.9" y="350.90" font-size="4.48" text-anchor="middle" fill="#223" font-weight="normal" dominant-baseline="central" textLength="4.67" lengthAdjust="spacingAndGlyphs" stroke="#223" stroke-width="0.1">++</text>
<text x="298.5" y="346.80" font-size="4.14" text-anchor="start" fill="#333" font-weight="normal" dominant-baseline="central" textLength="4.11" lengthAdjust="spacingAndGlyphs" stroke="#333" stroke-width="0.1">rst</text>
<text x="298.5" y="356.10" font-size="4.14" text-anchor="start" fill="#333" font-weight="normal" dominant-baseline="central" textLength="4.12" lengthAdjust="spacingAndGlyphs" stroke="#333" stroke-width="0.1">en</text>
<polyline points="314.8,350.8 324.0,350.8" fill="none" stroke="#6e6e6e" stroke-width="1"/>
<polygon points="324.0,350.8 319.8,348.7 319.8,352.9" fill="#000"/>
<rect x="324.0" y="344.5" width="44.4" height="13.4" fill="#ffff00" stroke="#666" stroke-width="0.8"/>
<rect x="324.6" y="354.7" width="2.8" height="2.8" fill="#f4f4f4" stroke="#777" stroke-width="0.4"/>
<polygon points="324.9,357.2 324.9,356.1 326.2,355.0 327.1,355.0 327.1,355.7 325.6,357.2" fill="#e02a2a"/>
<text x="325.5" y="351.70" font-size="4.14" text-anchor="start" fill="#333" font-weight="normal" dominant-baseline="central" textLength="12.55" lengthAdjust="spacingAndGlyphs" stroke="#333" stroke-width="0.1">reg_out</text>
<text x="367.0" y="351.70" font-size="4.14" text-anchor="end" fill="#333" font-weight="normal" dominant-baseline="central" textLength="12.96" lengthAdjust="spacingAndGlyphs" stroke="#333" stroke-width="0.1">sim_out</text>
<text x="346.2" y="362.30" font-size="5.04" text-anchor="middle" fill="#333" font-weight="normal" dominant-baseline="central" textLength="18.26" lengthAdjust="spacingAndGlyphs" stroke="#333" stroke-width="0.1">acc_num</text>
<polyline points="368.4,351.0 381.0,351.0" fill="none" stroke="#6e6e6e" stroke-width="1"/>
<polygon points="381.0,351.0 376.8,348.9 376.8,353.1" fill="#000"/>
<rect x="381.0" y="345.0" width="9.8" height="11.6" fill="#fff" stroke="#777" stroke-width="0.8"/>
<rect x="382.6" y="347.2" width="6.6" height="4.3" fill="#fff" stroke="#888" stroke-width="0.5"/>
<text x="386.0" y="361.70" font-size="5.04" text-anchor="middle" fill="#333" font-weight="normal" dominant-baseline="central" textLength="15.26" lengthAdjust="spacingAndGlyphs" stroke="#333" stroke-width="0.1">Scope2</text>
<polyline points="279.4,368.4 298.0,368.4" fill="none" stroke="#6e6e6e" stroke-width="1"/>
<polygon points="298.0,368.4 293.8,366.3 293.8,370.5" fill="#000"/>
<polygon points="298.0,368.6 307.3,365.5 334.7,365.5 334.7,371.8 307.3,371.8" fill="#fff" stroke="#555" stroke-width="0.8"/>
<text x="321.0" y="369.65" font-size="4.9" text-anchor="middle" fill="#333" font-weight="normal" dominant-baseline="central" textLength="18.95" lengthAdjust="spacingAndGlyphs" stroke="#333" stroke-width="0.1">new_acc</text>
<rect x="286.0" y="377.6" width="42.4" height="48.0" fill="#fff" stroke="#777" stroke-width="0.8"/>
<text x="287.2" y="386.90" font-size="4.37" text-anchor="start" fill="#222" font-weight="normal" dominant-baseline="central" textLength="15.39" lengthAdjust="spacingAndGlyphs" stroke="#222" stroke-width="0.1">new_acc</text>
<text x="287.2" y="402.60" font-size="4.37" text-anchor="start" fill="#222" font-weight="normal" dominant-baseline="central" textLength="2.17" lengthAdjust="spacingAndGlyphs" stroke="#222" stroke-width="0.1">a</text>
<text x="287.2" y="418.30" font-size="4.37" text-anchor="start" fill="#222" font-weight="normal" dominant-baseline="central" textLength="2.17" lengthAdjust="spacingAndGlyphs" stroke="#222" stroke-width="0.1">b</text>
<text x="307.0" y="429.80" font-size="5.04" text-anchor="middle" fill="#333" font-weight="normal" dominant-baseline="central" textLength="12.26" lengthAdjust="spacingAndGlyphs" stroke="#333" stroke-width="0.1">dir_x0</text>
<polygon points="213.4,398.3 241.4,398.3 251.3,401.8 241.4,405.2 213.4,405.2" fill="#fff" stroke="#555" stroke-width="0.8"/>
<text x="227.4" y="402.75" font-size="4.9" text-anchor="middle" fill="#333" font-weight="normal" dominant-baseline="central" textLength="8.01" lengthAdjust="spacingAndGlyphs" stroke="#333" stroke-width="0.1">eq0</text>
<polyline points="251.3,401.9 264.0,401.9" fill="none" stroke="#6e6e6e" stroke-width="1"/>
<polygon points="264.0,401.9 259.8,399.8 259.8,404.0" fill="#000"/>
<rect x="264.0" y="397.6" width="9.0" height="8.8" fill="#c6d3ec" stroke="#7d8aa3" stroke-width="0.8"/>
<text x="268.5" y="402.50" font-size="3.36" text-anchor="middle" fill="#223" font-weight="normal" dominant-baseline="central" textLength="4.98" lengthAdjust="spacingAndGlyphs" stroke="#223" stroke-width="0.16">z⁻⁶</text>
<polyline points="273.0,402.1 286.0,402.1" fill="none" stroke="#6e6e6e" stroke-width="1"/>
<polygon points="286.0,402.1 281.8,400.0 281.8,404.2" fill="#000"/>
<polygon points="213.4,413.5 241.4,413.5 251.3,416.9 241.4,420.3 213.4,420.3" fill="#fff" stroke="#555" stroke-width="0.8"/>
<text x="227.4" y="417.90" font-size="4.9" text-anchor="middle" fill="#333" font-weight="normal" dominant-baseline="central" textLength="8.01" lengthAdjust="spacingAndGlyphs" stroke="#333" stroke-width="0.1">eq1</text>
<polyline points="251.3,417.0 264.0,417.0" fill="none" stroke="#6e6e6e" stroke-width="1"/>
<polygon points="264.0,417.0 259.8,414.9 259.8,419.1" fill="#000"/>
<rect x="264.0" y="412.2" width="9.0" height="9.4" fill="#c6d3ec" stroke="#7d8aa3" stroke-width="0.8"/>
<text x="268.5" y="417.40" font-size="3.36" text-anchor="middle" fill="#223" font-weight="normal" dominant-baseline="central" textLength="4.98" lengthAdjust="spacingAndGlyphs" stroke="#223" stroke-width="0.16">z⁻⁶</text>
<polyline points="273.0,417.8 286.0,417.8" fill="none" stroke="#6e6e6e" stroke-width="1"/>
<polygon points="286.0,417.8 281.8,415.7 281.8,419.9" fill="#000"/>
</g>
</svg>
</body></html>
